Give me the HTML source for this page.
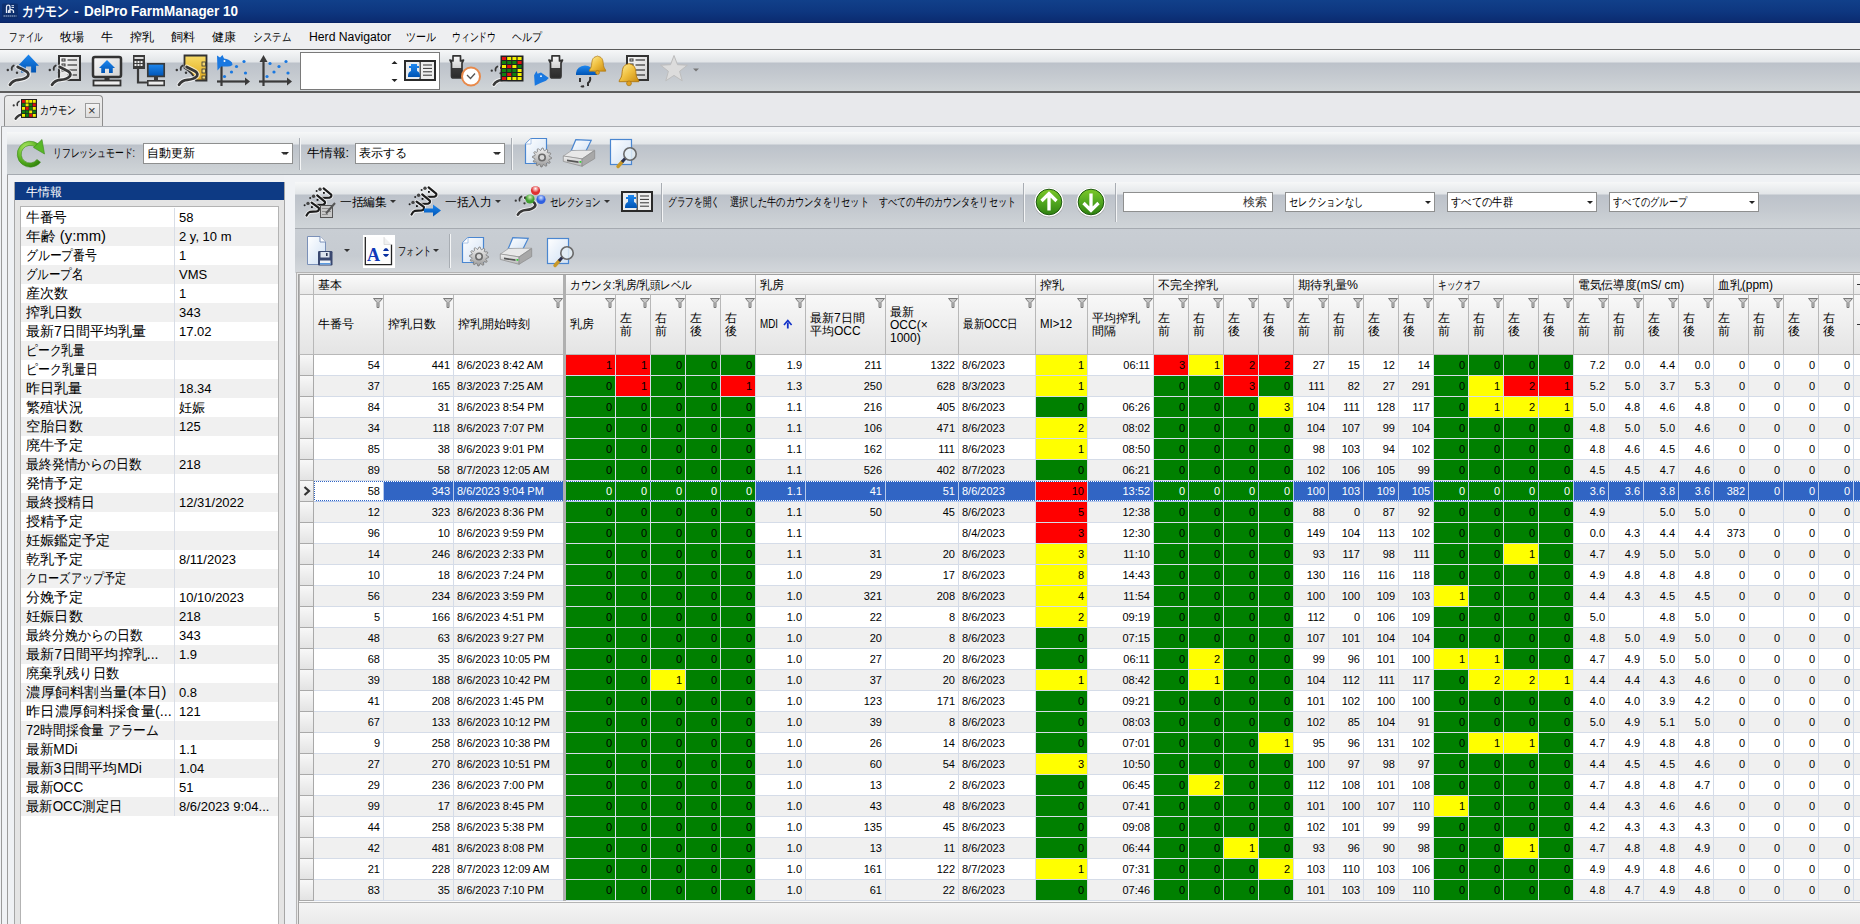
<!DOCTYPE html><html><head><meta charset="utf-8"><style>
*{margin:0;padding:0;box-sizing:border-box}
html,body{width:1860px;height:924px;overflow:hidden;background:#f0f2f5;font-family:"Liberation Sans",sans-serif;font-size:12px;color:#000}
.a{position:absolute}
.t{position:absolute;white-space:nowrap;line-height:1;transform-origin:0 0}
.tb{background:linear-gradient(#f6f7f8 0,#e2e5e8 12px,#bcc2ca 13px,#c4c9cf 60%,#d0d5d8 100%)}
.cb{position:absolute;background:#fff;border:1px solid #8e8f8f}
.cb i{position:absolute;right:3px;top:8px;width:0;height:0;border-left:3px solid transparent;border-right:3px solid transparent;border-top:3px solid #222}
.sep{position:absolute;width:2px;border-left:1px solid #a8adb3;border-right:1px solid #f4f5f6}
.hb{position:absolute;background:linear-gradient(#fbfbfb,#e9e9e9)}
.hc{position:absolute;background:linear-gradient(#f8f8f8,#eaeaea 70%,#e4e4e4)}
.fn{position:absolute;top:298px;width:10px;height:10px}
.r{position:absolute;height:20px}
.c{position:absolute;top:0;height:20px;font-size:11px;line-height:20px;white-space:nowrap;overflow:hidden}
.c.n{text-align:right;padding-right:3px}
.c.l{padding-left:3px}
.g{background:#008000}.rd{background:#f00}.y{background:#ff0}
.sel .c{color:#fff}
.pr{position:absolute;left:21px;width:257px;height:19px}
</style></head><body><div class="a" style="left:0px;top:0px;width:1860px;height:23px;background:linear-gradient(#11408a,#0e3780 50%,#0b2b70 95%,#06205e)"></div><svg class="a" style="left:0;top:0" width="20" height="22"><rect x="2" y="3.5" width="16" height="15" rx="1.5" fill="#0c2d68" fill-opacity="0.8"/><path d="M6.5,13 V7 Q6.5,5.2 8.3,5.2 Q10,5.2 10,7 V13 M8.5,13 V11.5 Q8.5,9.6 11,9.6 Q13.5,9.6 13.5,11.5 V13" fill="none" stroke="#e8eef8" stroke-width="1.3"/><rect x="11.5" y="5.2" width="2.5" height="1" fill="#dde6f4"/><rect x="11.5" y="7" width="2.5" height="1" fill="#dde6f4"/><path d="M3.5,16 H16.5" stroke="#aabbd8" stroke-width="1.2" stroke-dasharray="1.5 .5"/></svg><div id="t1" class="t" style="left:22px;top:4px;font-size:14px;font-weight:bold;color:#fff;transform:scaleX(0.839);">カウモン</div><div id="t2" class="t" style="left:74px;top:4px;font-size:14px;font-weight:bold;color:#fff;">-</div><div id="t3" class="t" style="left:84px;top:4px;font-size:14px;font-weight:bold;color:#fff;transform:scaleX(0.961);">DelPro FarmManager 10</div><div class="a" style="left:0px;top:23px;width:1860px;height:26px;background:#eeeff1"></div><div id="t4" class="t" style="left:9px;top:31px;transform:scaleX(0.708);">ファイル</div><div id="t5" class="t" style="left:60px;top:31px;transform:scaleX(1.000);">牧場</div><div id="t6" class="t" style="left:101px;top:31px;transform:scaleX(1.000);">牛</div><div id="t7" class="t" style="left:130px;top:31px;transform:scaleX(1.000);">搾乳</div><div id="t8" class="t" style="left:171px;top:31px;transform:scaleX(1.000);">飼料</div><div id="t9" class="t" style="left:212px;top:31px;transform:scaleX(1.000);">健康</div><div id="t10" class="t" style="left:253px;top:31px;transform:scaleX(0.792);">システム</div><div id="t11" class="t" style="left:309px;top:31px;transform:scaleX(1.016);">Herd Navigator</div><div id="t12" class="t" style="left:406px;top:31px;transform:scaleX(0.833);">ツール</div><div id="t13" class="t" style="left:452px;top:31px;transform:scaleX(0.733);">ウィンドウ</div><div id="t14" class="t" style="left:512px;top:31px;transform:scaleX(0.833);">ヘルプ</div><div class="a tb" style="left:0px;top:49px;width:1860px;height:44px;border-top:1px solid #5a5a5a;border-bottom:2px solid #5d5d5d"></div><div class="a" style="left:0px;top:93px;width:1860px;height:33px;background:#e8e9ec"></div><div class="a" style="left:4px;top:95px;width:99px;height:32px;background:linear-gradient(#ececec,#e3e3e3);border:1px solid #8d8d8d;border-bottom:none;border-radius:4px 4px 0 0"></div><div id="t15" class="t" style="left:40px;top:104px;transform:scaleX(0.750);">カウモン</div><div class="a" style="left:85px;top:103px;width:15px;height:15px;background:linear-gradient(#f4f4f4,#dcdcdc);border:1px solid #9a9a9a"></div><div id="t16" class="t" style="left:88px;top:104px;font-size:13px;color:#333;">×</div><div class="a" style="left:1px;top:126px;width:1859px;height:798px;background:#f0f2f5;border-left:1px solid #9a9a9a;border-top:1px solid #a9acb1"></div><div class="a tb" style="left:7px;top:132px;width:1853px;height:43px;border-bottom:1px solid #a5aab0"></div><div id="t17" class="t" style="left:53px;top:147px;transform:scaleX(0.736);">リフレッシュモード:</div><div class="cb" style="left:143px;top:143px;width:150px;height:21px"><i></i></div><div id="t18" class="t" style="left:147px;top:147px;">自動更新</div><div class="sep" style="left:299px;top:138px;height:32px"></div><div id="t19" class="t" style="left:307px;top:147px;transform:scaleX(1.068);">牛情報:</div><div class="cb" style="left:355px;top:143px;width:150px;height:21px"><i></i></div><div id="t20" class="t" style="left:359px;top:147px;">表示する</div><div class="sep" style="left:511px;top:138px;height:32px"></div><div class="a" style="left:7px;top:175px;width:278px;height:749px;background:#eff1f4;border-left:1px solid #9c9c9c;border-right:1px solid #9c9c9c"></div><div class="a" style="left:14px;top:182px;width:271px;height:742px;background:#e4e4e4;border-left:1px solid #a6a6a6;border-right:1px solid #a6a6a6"></div><div class="a" style="left:284px;top:175px;width:2px;height:7px;background:#f0f2f5"></div><div class="a" style="left:15px;top:182px;width:269px;height:18px;background:#0d3a84"></div><div id="t21" class="t" style="left:26px;top:186px;color:#fff;transform:scaleX(1.000);">牛情報</div><div class="a" style="left:20px;top:206px;width:259px;height:718px;background:#fff;border:1px solid #b3b3b3;border-bottom:none"></div><div class="pr" style="top:208px;background:#fff"></div><div id="t22" class="t" style="left:26px;top:210px;font-size:14px;transform:scaleX(0.976);">牛番号</div><div id="t23" class="t" style="left:179px;top:211px;font-size:13px;">58</div><div class="pr" style="top:227px;background:#f0f0f0"></div><div id="t24" class="t" style="left:26px;top:229px;font-size:14px;transform:scaleX(1.060);">年齢 (y:mm)</div><div id="t25" class="t" style="left:179px;top:230px;font-size:13px;">2 y, 10 m</div><div class="pr" style="top:246px;background:#fff"></div><div id="t26" class="t" style="left:26px;top:248px;font-size:14px;transform:scaleX(0.845);">グループ番号</div><div id="t27" class="t" style="left:179px;top:249px;font-size:13px;">1</div><div class="pr" style="top:265px;background:#f0f0f0"></div><div id="t28" class="t" style="left:26px;top:267px;font-size:14px;transform:scaleX(0.821);">グループ名</div><div id="t29" class="t" style="left:179px;top:268px;font-size:13px;">VMS</div><div class="pr" style="top:284px;background:#fff"></div><div id="t30" class="t" style="left:26px;top:286px;font-size:14px;transform:scaleX(1.012);">産次数</div><div id="t31" class="t" style="left:179px;top:287px;font-size:13px;">1</div><div class="pr" style="top:303px;background:#f0f0f0"></div><div id="t32" class="t" style="left:26px;top:305px;font-size:14px;transform:scaleX(1.009);">搾乳日数</div><div id="t33" class="t" style="left:179px;top:306px;font-size:13px;">343</div><div class="pr" style="top:322px;background:#fff"></div><div id="t34" class="t" style="left:26px;top:324px;font-size:14px;transform:scaleX(1.002);">最新7日間平均乳量</div><div id="t35" class="t" style="left:179px;top:325px;font-size:13px;">17.02</div><div class="pr" style="top:341px;background:#f0f0f0"></div><div id="t36" class="t" style="left:26px;top:343px;font-size:14px;transform:scaleX(0.843);">ピーク乳量</div><div class="pr" style="top:360px;background:#fff"></div><div id="t37" class="t" style="left:26px;top:362px;font-size:14px;transform:scaleX(0.852);">ピーク乳量日</div><div class="pr" style="top:379px;background:#f0f0f0"></div><div id="t38" class="t" style="left:26px;top:381px;font-size:14px;transform:scaleX(1.009);">昨日乳量</div><div id="t39" class="t" style="left:179px;top:382px;font-size:13px;">18.34</div><div class="pr" style="top:398px;background:#fff"></div><div id="t40" class="t" style="left:26px;top:400px;font-size:14px;transform:scaleX(1.012);">繁殖状況</div><div id="t41" class="t" style="left:179px;top:401px;font-size:13px;">妊娠</div><div class="pr" style="top:417px;background:#f0f0f0"></div><div id="t42" class="t" style="left:26px;top:419px;font-size:14px;transform:scaleX(1.012);">空胎日数</div><div id="t43" class="t" style="left:179px;top:420px;font-size:13px;">125</div><div class="pr" style="top:436px;background:#fff"></div><div id="t44" class="t" style="left:26px;top:438px;font-size:14px;transform:scaleX(1.012);">廃牛予定</div><div class="pr" style="top:455px;background:#f0f0f0"></div><div id="t45" class="t" style="left:26px;top:457px;font-size:14px;transform:scaleX(0.919);">最終発情からの日数</div><div id="t46" class="t" style="left:179px;top:458px;font-size:13px;">218</div><div class="pr" style="top:474px;background:#fff"></div><div id="t47" class="t" style="left:26px;top:476px;font-size:14px;transform:scaleX(1.012);">発情予定</div><div class="pr" style="top:493px;background:#f0f0f0"></div><div id="t48" class="t" style="left:26px;top:495px;font-size:14px;transform:scaleX(0.986);">最終授精日</div><div id="t49" class="t" style="left:179px;top:496px;font-size:13px;">12/31/2022</div><div class="pr" style="top:512px;background:#fff"></div><div id="t50" class="t" style="left:26px;top:514px;font-size:14px;transform:scaleX(1.012);">授精予定</div><div class="pr" style="top:531px;background:#f0f0f0"></div><div id="t51" class="t" style="left:26px;top:533px;font-size:14px;transform:scaleX(1.005);">妊娠鑑定予定</div><div class="pr" style="top:550px;background:#fff"></div><div id="t52" class="t" style="left:26px;top:552px;font-size:14px;transform:scaleX(1.012);">乾乳予定</div><div id="t53" class="t" style="left:179px;top:553px;font-size:13px;">8/11/2023</div><div class="pr" style="top:569px;background:#f0f0f0"></div><div id="t54" class="t" style="left:26px;top:571px;font-size:14px;transform:scaleX(0.796);">クローズアップ予定</div><div class="pr" style="top:588px;background:#fff"></div><div id="t55" class="t" style="left:26px;top:590px;font-size:14px;transform:scaleX(1.012);">分娩予定</div><div id="t56" class="t" style="left:179px;top:591px;font-size:13px;">10/10/2023</div><div class="pr" style="top:607px;background:#f0f0f0"></div><div id="t57" class="t" style="left:26px;top:609px;font-size:14px;transform:scaleX(1.014);">妊娠日数</div><div id="t58" class="t" style="left:179px;top:610px;font-size:13px;">218</div><div class="pr" style="top:626px;background:#fff"></div><div id="t59" class="t" style="left:26px;top:628px;font-size:14px;transform:scaleX(0.925);">最終分娩からの日数</div><div id="t60" class="t" style="left:179px;top:629px;font-size:13px;">343</div><div class="pr" style="top:645px;background:#f0f0f0"></div><div id="t61" class="t" style="left:26px;top:647px;font-size:14px;transform:scaleX(1.008);">最新7日間平均搾乳...</div><div id="t62" class="t" style="left:179px;top:648px;font-size:13px;">1.9</div><div class="pr" style="top:664px;background:#fff"></div><div id="t63" class="t" style="left:26px;top:666px;font-size:14px;transform:scaleX(0.954);">廃棄乳残り日数</div><div class="pr" style="top:683px;background:#f0f0f0"></div><div id="t64" class="t" style="left:26px;top:685px;font-size:14px;transform:scaleX(1.037);">濃厚飼料割当量(本日)</div><div id="t65" class="t" style="left:179px;top:686px;font-size:13px;">0.8</div><div class="pr" style="top:702px;background:#fff"></div><div id="t66" class="t" style="left:26px;top:704px;font-size:14px;transform:scaleX(1.023);">昨日濃厚飼料採食量(...</div><div id="t67" class="t" style="left:179px;top:705px;font-size:13px;">121</div><div class="pr" style="top:721px;background:#f0f0f0"></div><div id="t68" class="t" style="left:26px;top:723px;font-size:14px;transform:scaleX(0.914);">72時間採食量 アラーム</div><div class="pr" style="top:740px;background:#fff"></div><div id="t69" class="t" style="left:26px;top:742px;font-size:14px;transform:scaleX(0.974);">最新MDi</div><div id="t70" class="t" style="left:179px;top:743px;font-size:13px;">1.1</div><div class="pr" style="top:759px;background:#f0f0f0"></div><div id="t71" class="t" style="left:26px;top:761px;font-size:14px;transform:scaleX(0.993);">最新3日間平均MDi</div><div id="t72" class="t" style="left:179px;top:762px;font-size:13px;">1.04</div><div class="pr" style="top:778px;background:#fff"></div><div id="t73" class="t" style="left:26px;top:780px;font-size:14px;transform:scaleX(0.967);">最新OCC</div><div id="t74" class="t" style="left:179px;top:781px;font-size:13px;">51</div><div class="pr" style="top:797px;background:#f0f0f0"></div><div id="t75" class="t" style="left:26px;top:799px;font-size:14px;transform:scaleX(0.952);">最新OCC測定日</div><div id="t76" class="t" style="left:179px;top:800px;font-size:13px;">8/6/2023 9:04...</div><div class="a" style="left:174px;top:208px;width:1px;height:608px;background:#d8dde6"></div><div class="a" style="left:295px;top:182px;width:1565px;height:742px;background:#eef0f3"></div><div class="a tb" style="left:295px;top:182px;width:1565px;height:47px;border-bottom:1px solid #a5aab0"></div><div class="a" style="left:295px;top:229px;width:1565px;height:44px;background:linear-gradient(#c9ced4,#c6cbd1 60%,#d3d7db)"></div><div class="a" style="left:296px;top:272px;width:1564px;height:632px;background:#e8e8e8;border:1px solid #b4b4b4;border-right:none"></div><div class="a" style="left:298px;top:274px;width:1562px;height:628px;background:#fff;border:1px solid #a0a0a0;border-right:none"></div><div class="a" style="left:299px;top:275px;width:1561px;height:80px;background:#b8b8b8"></div><div class="hb" style="left:300px;top:275px;width:13px;height:19px"></div><div class="hb" style="left:314px;top:275px;width:249px;height:19px"></div><div id="t77" class="t" style="left:318px;top:279px;transform:scaleX(1.000);">基本</div><div class="hb" style="left:566px;top:275px;width:189px;height:19px"></div><div id="t78" class="t" style="left:570px;top:279px;transform:scaleX(0.880);">カウンタ:乳房/乳頭レベル</div><div class="hb" style="left:756px;top:275px;width:279px;height:19px"></div><div id="t79" class="t" style="left:760px;top:279px;transform:scaleX(1.000);">乳房</div><div class="hb" style="left:1036px;top:275px;width:117px;height:19px"></div><div id="t80" class="t" style="left:1040px;top:279px;transform:scaleX(1.000);">搾乳</div><div class="hb" style="left:1154px;top:275px;width:139px;height:19px"></div><div id="t81" class="t" style="left:1158px;top:279px;transform:scaleX(1.000);">不完全搾乳</div><div class="hb" style="left:1294px;top:275px;width:139px;height:19px"></div><div id="t82" class="t" style="left:1298px;top:279px;transform:scaleX(1.023);">期待乳量%</div><div class="hb" style="left:1434px;top:275px;width:139px;height:19px"></div><div id="t83" class="t" style="left:1438px;top:279px;transform:scaleX(0.717);">キックオフ</div><div class="hb" style="left:1574px;top:275px;width:139px;height:19px"></div><div id="t84" class="t" style="left:1578px;top:279px;transform:scaleX(0.976);">電気伝導度(mS/ cm)</div><div class="hb" style="left:1714px;top:275px;width:139px;height:19px"></div><div id="t85" class="t" style="left:1718px;top:279px;transform:scaleX(0.994);">血乳(ppm)</div><div class="hb" style="left:1854px;top:275px;width:6px;height:19px"></div><div class="hc" style="left:300px;top:295px;width:13px;height:59px"></div><div class="hc" style="left:314px;top:295px;width:69px;height:59px"></div><div class="t" style="left:318px;top:318px;line-height:13px">牛番号</div><svg class="fn" style="left:373px" viewBox="0 0 10 10"><path d="M0.5 0.5H9.5L6 4.5V9.5H4V4.5Z" fill="#c9c9c9" stroke="#7a7a7a" stroke-width="1"/></svg><div class="hc" style="left:384px;top:295px;width:69px;height:59px"></div><div class="t" style="left:388px;top:318px;line-height:13px">搾乳日数</div><svg class="fn" style="left:443px" viewBox="0 0 10 10"><path d="M0.5 0.5H9.5L6 4.5V9.5H4V4.5Z" fill="#c9c9c9" stroke="#7a7a7a" stroke-width="1"/></svg><div class="hc" style="left:454px;top:295px;width:109px;height:59px"></div><div class="t" style="left:458px;top:318px;line-height:13px">搾乳開始時刻</div><svg class="fn" style="left:553px" viewBox="0 0 10 10"><path d="M0.5 0.5H9.5L6 4.5V9.5H4V4.5Z" fill="#c9c9c9" stroke="#7a7a7a" stroke-width="1"/></svg><div class="hc" style="left:566px;top:295px;width:49px;height:59px"></div><div class="t" style="left:570px;top:318px;line-height:13px">乳房</div><svg class="fn" style="left:605px" viewBox="0 0 10 10"><path d="M0.5 0.5H9.5L6 4.5V9.5H4V4.5Z" fill="#c9c9c9" stroke="#7a7a7a" stroke-width="1"/></svg><div class="hc" style="left:616px;top:295px;width:34px;height:59px"></div><div class="t" style="left:620px;top:312px;line-height:13px">左<br>前</div><svg class="fn" style="left:640px" viewBox="0 0 10 10"><path d="M0.5 0.5H9.5L6 4.5V9.5H4V4.5Z" fill="#c9c9c9" stroke="#7a7a7a" stroke-width="1"/></svg><div class="hc" style="left:651px;top:295px;width:34px;height:59px"></div><div class="t" style="left:655px;top:312px;line-height:13px">右<br>前</div><svg class="fn" style="left:675px" viewBox="0 0 10 10"><path d="M0.5 0.5H9.5L6 4.5V9.5H4V4.5Z" fill="#c9c9c9" stroke="#7a7a7a" stroke-width="1"/></svg><div class="hc" style="left:686px;top:295px;width:34px;height:59px"></div><div class="t" style="left:690px;top:312px;line-height:13px">左<br>後</div><svg class="fn" style="left:710px" viewBox="0 0 10 10"><path d="M0.5 0.5H9.5L6 4.5V9.5H4V4.5Z" fill="#c9c9c9" stroke="#7a7a7a" stroke-width="1"/></svg><div class="hc" style="left:721px;top:295px;width:34px;height:59px"></div><div class="t" style="left:725px;top:312px;line-height:13px">右<br>後</div><svg class="fn" style="left:745px" viewBox="0 0 10 10"><path d="M0.5 0.5H9.5L6 4.5V9.5H4V4.5Z" fill="#c9c9c9" stroke="#7a7a7a" stroke-width="1"/></svg><div class="hc" style="left:756px;top:295px;width:49px;height:59px"></div><div id="t86" class="t" style="left:760px;top:318px;line-height:13px;transform:scaleX(0.818);">MDI</div><svg class="fn" style="left:795px" viewBox="0 0 10 10"><path d="M0.5 0.5H9.5L6 4.5V9.5H4V4.5Z" fill="#c9c9c9" stroke="#7a7a7a" stroke-width="1"/></svg><div class="hc" style="left:806px;top:295px;width:79px;height:59px"></div><div class="t" style="left:810px;top:312px;line-height:13px">最新7日間<br>平均OCC</div><svg class="fn" style="left:875px" viewBox="0 0 10 10"><path d="M0.5 0.5H9.5L6 4.5V9.5H4V4.5Z" fill="#c9c9c9" stroke="#7a7a7a" stroke-width="1"/></svg><div class="hc" style="left:886px;top:295px;width:72px;height:59px"></div><div class="t" style="left:890px;top:306px;line-height:13px">最新<br>OCC(×<br>1000)</div><svg class="fn" style="left:948px" viewBox="0 0 10 10"><path d="M0.5 0.5H9.5L6 4.5V9.5H4V4.5Z" fill="#c9c9c9" stroke="#7a7a7a" stroke-width="1"/></svg><div class="hc" style="left:959px;top:295px;width:76px;height:59px"></div><div id="t87" class="t" style="left:963px;top:318px;line-height:13px;transform:scaleX(0.878);">最新OCC日</div><svg class="fn" style="left:1025px" viewBox="0 0 10 10"><path d="M0.5 0.5H9.5L6 4.5V9.5H4V4.5Z" fill="#c9c9c9" stroke="#7a7a7a" stroke-width="1"/></svg><div class="hc" style="left:1036px;top:295px;width:51px;height:59px"></div><div id="t88" class="t" style="left:1040px;top:318px;line-height:13px;transform:scaleX(0.950);">MI&gt;12</div><svg class="fn" style="left:1077px" viewBox="0 0 10 10"><path d="M0.5 0.5H9.5L6 4.5V9.5H4V4.5Z" fill="#c9c9c9" stroke="#7a7a7a" stroke-width="1"/></svg><div class="hc" style="left:1088px;top:295px;width:65px;height:59px"></div><div class="t" style="left:1092px;top:312px;line-height:13px">平均搾乳<br>間隔</div><svg class="fn" style="left:1143px" viewBox="0 0 10 10"><path d="M0.5 0.5H9.5L6 4.5V9.5H4V4.5Z" fill="#c9c9c9" stroke="#7a7a7a" stroke-width="1"/></svg><div class="hc" style="left:1154px;top:295px;width:34px;height:59px"></div><div class="t" style="left:1158px;top:312px;line-height:13px">左<br>前</div><svg class="fn" style="left:1178px" viewBox="0 0 10 10"><path d="M0.5 0.5H9.5L6 4.5V9.5H4V4.5Z" fill="#c9c9c9" stroke="#7a7a7a" stroke-width="1"/></svg><div class="hc" style="left:1189px;top:295px;width:34px;height:59px"></div><div class="t" style="left:1193px;top:312px;line-height:13px">右<br>前</div><svg class="fn" style="left:1213px" viewBox="0 0 10 10"><path d="M0.5 0.5H9.5L6 4.5V9.5H4V4.5Z" fill="#c9c9c9" stroke="#7a7a7a" stroke-width="1"/></svg><div class="hc" style="left:1224px;top:295px;width:34px;height:59px"></div><div class="t" style="left:1228px;top:312px;line-height:13px">左<br>後</div><svg class="fn" style="left:1248px" viewBox="0 0 10 10"><path d="M0.5 0.5H9.5L6 4.5V9.5H4V4.5Z" fill="#c9c9c9" stroke="#7a7a7a" stroke-width="1"/></svg><div class="hc" style="left:1259px;top:295px;width:34px;height:59px"></div><div class="t" style="left:1263px;top:312px;line-height:13px">右<br>後</div><svg class="fn" style="left:1283px" viewBox="0 0 10 10"><path d="M0.5 0.5H9.5L6 4.5V9.5H4V4.5Z" fill="#c9c9c9" stroke="#7a7a7a" stroke-width="1"/></svg><div class="hc" style="left:1294px;top:295px;width:34px;height:59px"></div><div class="t" style="left:1298px;top:312px;line-height:13px">左<br>前</div><svg class="fn" style="left:1318px" viewBox="0 0 10 10"><path d="M0.5 0.5H9.5L6 4.5V9.5H4V4.5Z" fill="#c9c9c9" stroke="#7a7a7a" stroke-width="1"/></svg><div class="hc" style="left:1329px;top:295px;width:34px;height:59px"></div><div class="t" style="left:1333px;top:312px;line-height:13px">右<br>前</div><svg class="fn" style="left:1353px" viewBox="0 0 10 10"><path d="M0.5 0.5H9.5L6 4.5V9.5H4V4.5Z" fill="#c9c9c9" stroke="#7a7a7a" stroke-width="1"/></svg><div class="hc" style="left:1364px;top:295px;width:34px;height:59px"></div><div class="t" style="left:1368px;top:312px;line-height:13px">左<br>後</div><svg class="fn" style="left:1388px" viewBox="0 0 10 10"><path d="M0.5 0.5H9.5L6 4.5V9.5H4V4.5Z" fill="#c9c9c9" stroke="#7a7a7a" stroke-width="1"/></svg><div class="hc" style="left:1399px;top:295px;width:34px;height:59px"></div><div class="t" style="left:1403px;top:312px;line-height:13px">右<br>後</div><svg class="fn" style="left:1423px" viewBox="0 0 10 10"><path d="M0.5 0.5H9.5L6 4.5V9.5H4V4.5Z" fill="#c9c9c9" stroke="#7a7a7a" stroke-width="1"/></svg><div class="hc" style="left:1434px;top:295px;width:34px;height:59px"></div><div class="t" style="left:1438px;top:312px;line-height:13px">左<br>前</div><svg class="fn" style="left:1458px" viewBox="0 0 10 10"><path d="M0.5 0.5H9.5L6 4.5V9.5H4V4.5Z" fill="#c9c9c9" stroke="#7a7a7a" stroke-width="1"/></svg><div class="hc" style="left:1469px;top:295px;width:34px;height:59px"></div><div class="t" style="left:1473px;top:312px;line-height:13px">右<br>前</div><svg class="fn" style="left:1493px" viewBox="0 0 10 10"><path d="M0.5 0.5H9.5L6 4.5V9.5H4V4.5Z" fill="#c9c9c9" stroke="#7a7a7a" stroke-width="1"/></svg><div class="hc" style="left:1504px;top:295px;width:34px;height:59px"></div><div class="t" style="left:1508px;top:312px;line-height:13px">左<br>後</div><svg class="fn" style="left:1528px" viewBox="0 0 10 10"><path d="M0.5 0.5H9.5L6 4.5V9.5H4V4.5Z" fill="#c9c9c9" stroke="#7a7a7a" stroke-width="1"/></svg><div class="hc" style="left:1539px;top:295px;width:34px;height:59px"></div><div class="t" style="left:1543px;top:312px;line-height:13px">右<br>後</div><svg class="fn" style="left:1563px" viewBox="0 0 10 10"><path d="M0.5 0.5H9.5L6 4.5V9.5H4V4.5Z" fill="#c9c9c9" stroke="#7a7a7a" stroke-width="1"/></svg><div class="hc" style="left:1574px;top:295px;width:34px;height:59px"></div><div class="t" style="left:1578px;top:312px;line-height:13px">左<br>前</div><svg class="fn" style="left:1598px" viewBox="0 0 10 10"><path d="M0.5 0.5H9.5L6 4.5V9.5H4V4.5Z" fill="#c9c9c9" stroke="#7a7a7a" stroke-width="1"/></svg><div class="hc" style="left:1609px;top:295px;width:34px;height:59px"></div><div class="t" style="left:1613px;top:312px;line-height:13px">右<br>前</div><svg class="fn" style="left:1633px" viewBox="0 0 10 10"><path d="M0.5 0.5H9.5L6 4.5V9.5H4V4.5Z" fill="#c9c9c9" stroke="#7a7a7a" stroke-width="1"/></svg><div class="hc" style="left:1644px;top:295px;width:34px;height:59px"></div><div class="t" style="left:1648px;top:312px;line-height:13px">左<br>後</div><svg class="fn" style="left:1668px" viewBox="0 0 10 10"><path d="M0.5 0.5H9.5L6 4.5V9.5H4V4.5Z" fill="#c9c9c9" stroke="#7a7a7a" stroke-width="1"/></svg><div class="hc" style="left:1679px;top:295px;width:34px;height:59px"></div><div class="t" style="left:1683px;top:312px;line-height:13px">右<br>後</div><svg class="fn" style="left:1703px" viewBox="0 0 10 10"><path d="M0.5 0.5H9.5L6 4.5V9.5H4V4.5Z" fill="#c9c9c9" stroke="#7a7a7a" stroke-width="1"/></svg><div class="hc" style="left:1714px;top:295px;width:34px;height:59px"></div><div class="t" style="left:1718px;top:312px;line-height:13px">左<br>前</div><svg class="fn" style="left:1738px" viewBox="0 0 10 10"><path d="M0.5 0.5H9.5L6 4.5V9.5H4V4.5Z" fill="#c9c9c9" stroke="#7a7a7a" stroke-width="1"/></svg><div class="hc" style="left:1749px;top:295px;width:34px;height:59px"></div><div class="t" style="left:1753px;top:312px;line-height:13px">右<br>前</div><svg class="fn" style="left:1773px" viewBox="0 0 10 10"><path d="M0.5 0.5H9.5L6 4.5V9.5H4V4.5Z" fill="#c9c9c9" stroke="#7a7a7a" stroke-width="1"/></svg><div class="hc" style="left:1784px;top:295px;width:34px;height:59px"></div><div class="t" style="left:1788px;top:312px;line-height:13px">左<br>後</div><svg class="fn" style="left:1808px" viewBox="0 0 10 10"><path d="M0.5 0.5H9.5L6 4.5V9.5H4V4.5Z" fill="#c9c9c9" stroke="#7a7a7a" stroke-width="1"/></svg><div class="hc" style="left:1819px;top:295px;width:34px;height:59px"></div><div class="t" style="left:1823px;top:312px;line-height:13px">右<br>後</div><svg class="fn" style="left:1843px" viewBox="0 0 10 10"><path d="M0.5 0.5H9.5L6 4.5V9.5H4V4.5Z" fill="#c9c9c9" stroke="#7a7a7a" stroke-width="1"/></svg><div class="hc" style="left:1854px;top:295px;width:6px;height:59px"></div><div class="r" style="left:299px;top:355px;width:1561px;background:#d5dce8;height:21px"><div class="c" style="left:0;width:15px;height:21px;background:linear-gradient(#f8f8f8,#e3e3e3);border-left:1px solid #a9a9a9;border-right:1px solid #a9a9a9;border-bottom:1px solid #a9a9a9;"></div><div class="c n " style="left:15px;width:69px;background:#fff;">54</div><div class="c n " style="left:85px;width:69px;background:#fff;">441</div><div class="c l " style="left:155px;width:109px;background:#fff;">8/6/2023 8:42 AM</div><div class="c n rd" style="left:267px;width:49px;">1</div><div class="c n rd" style="left:317px;width:34px;">1</div><div class="c n g" style="left:352px;width:34px;">0</div><div class="c n g" style="left:387px;width:34px;">0</div><div class="c n g" style="left:422px;width:34px;">0</div><div class="c n " style="left:457px;width:49px;background:#fff;">1.9</div><div class="c n " style="left:507px;width:79px;background:#fff;">211</div><div class="c n " style="left:587px;width:72px;background:#fff;">1322</div><div class="c l " style="left:660px;width:76px;background:#fff;">8/6/2023</div><div class="c n y" style="left:737px;width:51px;">1</div><div class="c n " style="left:789px;width:65px;background:#fff;">06:11</div><div class="c n rd" style="left:855px;width:34px;">3</div><div class="c n y" style="left:890px;width:34px;">1</div><div class="c n rd" style="left:925px;width:34px;">2</div><div class="c n rd" style="left:960px;width:34px;">2</div><div class="c n " style="left:995px;width:34px;background:#fff;">27</div><div class="c n " style="left:1030px;width:34px;background:#fff;">15</div><div class="c n " style="left:1065px;width:34px;background:#fff;">12</div><div class="c n " style="left:1100px;width:34px;background:#fff;">14</div><div class="c n g" style="left:1135px;width:34px;">0</div><div class="c n g" style="left:1170px;width:34px;">0</div><div class="c n g" style="left:1205px;width:34px;">0</div><div class="c n g" style="left:1240px;width:34px;">0</div><div class="c n " style="left:1275px;width:34px;background:#fff;">7.2</div><div class="c n " style="left:1310px;width:34px;background:#fff;">0.0</div><div class="c n " style="left:1345px;width:34px;background:#fff;">4.4</div><div class="c n " style="left:1380px;width:34px;background:#fff;">0.0</div><div class="c n " style="left:1415px;width:34px;background:#fff;">0</div><div class="c n " style="left:1450px;width:34px;background:#fff;">0</div><div class="c n " style="left:1485px;width:34px;background:#fff;">0</div><div class="c n " style="left:1520px;width:34px;background:#fff;">0</div><div class="c n " style="left:1555px;width:6px;background:#fff;"></div></div><div class="r" style="left:299px;top:376px;width:1561px;background:#d5dce8;height:21px"><div class="c" style="left:0;width:15px;height:21px;background:linear-gradient(#f8f8f8,#e3e3e3);border-left:1px solid #a9a9a9;border-right:1px solid #a9a9a9;border-bottom:1px solid #a9a9a9;"></div><div class="c n " style="left:15px;width:69px;background:#f0f0f0;">37</div><div class="c n " style="left:85px;width:69px;background:#f0f0f0;">165</div><div class="c l " style="left:155px;width:109px;background:#f0f0f0;">8/3/2023 7:25 AM</div><div class="c n g" style="left:267px;width:49px;">0</div><div class="c n rd" style="left:317px;width:34px;">1</div><div class="c n g" style="left:352px;width:34px;">0</div><div class="c n g" style="left:387px;width:34px;">0</div><div class="c n rd" style="left:422px;width:34px;">1</div><div class="c n " style="left:457px;width:49px;background:#f0f0f0;">1.3</div><div class="c n " style="left:507px;width:79px;background:#f0f0f0;">250</div><div class="c n " style="left:587px;width:72px;background:#f0f0f0;">628</div><div class="c l " style="left:660px;width:76px;background:#f0f0f0;">8/3/2023</div><div class="c n y" style="left:737px;width:51px;">1</div><div class="c n " style="left:789px;width:65px;background:#f0f0f0;"></div><div class="c n g" style="left:855px;width:34px;">0</div><div class="c n g" style="left:890px;width:34px;">0</div><div class="c n rd" style="left:925px;width:34px;">3</div><div class="c n g" style="left:960px;width:34px;">0</div><div class="c n " style="left:995px;width:34px;background:#f0f0f0;">111</div><div class="c n " style="left:1030px;width:34px;background:#f0f0f0;">82</div><div class="c n " style="left:1065px;width:34px;background:#f0f0f0;">27</div><div class="c n " style="left:1100px;width:34px;background:#f0f0f0;">291</div><div class="c n g" style="left:1135px;width:34px;">0</div><div class="c n y" style="left:1170px;width:34px;">1</div><div class="c n rd" style="left:1205px;width:34px;">2</div><div class="c n rd" style="left:1240px;width:34px;">1</div><div class="c n " style="left:1275px;width:34px;background:#f0f0f0;">5.2</div><div class="c n " style="left:1310px;width:34px;background:#f0f0f0;">5.0</div><div class="c n " style="left:1345px;width:34px;background:#f0f0f0;">3.7</div><div class="c n " style="left:1380px;width:34px;background:#f0f0f0;">5.3</div><div class="c n " style="left:1415px;width:34px;background:#f0f0f0;">0</div><div class="c n " style="left:1450px;width:34px;background:#f0f0f0;">0</div><div class="c n " style="left:1485px;width:34px;background:#f0f0f0;">0</div><div class="c n " style="left:1520px;width:34px;background:#f0f0f0;">0</div><div class="c n " style="left:1555px;width:6px;background:#f0f0f0;"></div></div><div class="r" style="left:299px;top:397px;width:1561px;background:#d5dce8;height:21px"><div class="c" style="left:0;width:15px;height:21px;background:linear-gradient(#f8f8f8,#e3e3e3);border-left:1px solid #a9a9a9;border-right:1px solid #a9a9a9;border-bottom:1px solid #a9a9a9;"></div><div class="c n " style="left:15px;width:69px;background:#fff;">84</div><div class="c n " style="left:85px;width:69px;background:#fff;">31</div><div class="c l " style="left:155px;width:109px;background:#fff;">8/6/2023 8:54 PM</div><div class="c n g" style="left:267px;width:49px;">0</div><div class="c n g" style="left:317px;width:34px;">0</div><div class="c n g" style="left:352px;width:34px;">0</div><div class="c n g" style="left:387px;width:34px;">0</div><div class="c n g" style="left:422px;width:34px;">0</div><div class="c n " style="left:457px;width:49px;background:#fff;">1.1</div><div class="c n " style="left:507px;width:79px;background:#fff;">216</div><div class="c n " style="left:587px;width:72px;background:#fff;">405</div><div class="c l " style="left:660px;width:76px;background:#fff;">8/6/2023</div><div class="c n g" style="left:737px;width:51px;">0</div><div class="c n " style="left:789px;width:65px;background:#fff;">06:26</div><div class="c n g" style="left:855px;width:34px;">0</div><div class="c n g" style="left:890px;width:34px;">0</div><div class="c n g" style="left:925px;width:34px;">0</div><div class="c n y" style="left:960px;width:34px;">3</div><div class="c n " style="left:995px;width:34px;background:#fff;">104</div><div class="c n " style="left:1030px;width:34px;background:#fff;">111</div><div class="c n " style="left:1065px;width:34px;background:#fff;">128</div><div class="c n " style="left:1100px;width:34px;background:#fff;">117</div><div class="c n g" style="left:1135px;width:34px;">0</div><div class="c n y" style="left:1170px;width:34px;">1</div><div class="c n y" style="left:1205px;width:34px;">2</div><div class="c n y" style="left:1240px;width:34px;">1</div><div class="c n " style="left:1275px;width:34px;background:#fff;">5.0</div><div class="c n " style="left:1310px;width:34px;background:#fff;">4.8</div><div class="c n " style="left:1345px;width:34px;background:#fff;">4.6</div><div class="c n " style="left:1380px;width:34px;background:#fff;">4.8</div><div class="c n " style="left:1415px;width:34px;background:#fff;">0</div><div class="c n " style="left:1450px;width:34px;background:#fff;">0</div><div class="c n " style="left:1485px;width:34px;background:#fff;">0</div><div class="c n " style="left:1520px;width:34px;background:#fff;">0</div><div class="c n " style="left:1555px;width:6px;background:#fff;"></div></div><div class="r" style="left:299px;top:418px;width:1561px;background:#d5dce8;height:21px"><div class="c" style="left:0;width:15px;height:21px;background:linear-gradient(#f8f8f8,#e3e3e3);border-left:1px solid #a9a9a9;border-right:1px solid #a9a9a9;border-bottom:1px solid #a9a9a9;"></div><div class="c n " style="left:15px;width:69px;background:#f0f0f0;">34</div><div class="c n " style="left:85px;width:69px;background:#f0f0f0;">118</div><div class="c l " style="left:155px;width:109px;background:#f0f0f0;">8/6/2023 7:07 PM</div><div class="c n g" style="left:267px;width:49px;">0</div><div class="c n g" style="left:317px;width:34px;">0</div><div class="c n g" style="left:352px;width:34px;">0</div><div class="c n g" style="left:387px;width:34px;">0</div><div class="c n g" style="left:422px;width:34px;">0</div><div class="c n " style="left:457px;width:49px;background:#f0f0f0;">1.1</div><div class="c n " style="left:507px;width:79px;background:#f0f0f0;">106</div><div class="c n " style="left:587px;width:72px;background:#f0f0f0;">471</div><div class="c l " style="left:660px;width:76px;background:#f0f0f0;">8/6/2023</div><div class="c n y" style="left:737px;width:51px;">2</div><div class="c n " style="left:789px;width:65px;background:#f0f0f0;">08:02</div><div class="c n g" style="left:855px;width:34px;">0</div><div class="c n g" style="left:890px;width:34px;">0</div><div class="c n g" style="left:925px;width:34px;">0</div><div class="c n g" style="left:960px;width:34px;">0</div><div class="c n " style="left:995px;width:34px;background:#f0f0f0;">104</div><div class="c n " style="left:1030px;width:34px;background:#f0f0f0;">107</div><div class="c n " style="left:1065px;width:34px;background:#f0f0f0;">99</div><div class="c n " style="left:1100px;width:34px;background:#f0f0f0;">104</div><div class="c n g" style="left:1135px;width:34px;">0</div><div class="c n g" style="left:1170px;width:34px;">0</div><div class="c n g" style="left:1205px;width:34px;">0</div><div class="c n g" style="left:1240px;width:34px;">0</div><div class="c n " style="left:1275px;width:34px;background:#f0f0f0;">4.8</div><div class="c n " style="left:1310px;width:34px;background:#f0f0f0;">5.0</div><div class="c n " style="left:1345px;width:34px;background:#f0f0f0;">5.0</div><div class="c n " style="left:1380px;width:34px;background:#f0f0f0;">4.6</div><div class="c n " style="left:1415px;width:34px;background:#f0f0f0;">0</div><div class="c n " style="left:1450px;width:34px;background:#f0f0f0;">0</div><div class="c n " style="left:1485px;width:34px;background:#f0f0f0;">0</div><div class="c n " style="left:1520px;width:34px;background:#f0f0f0;">0</div><div class="c n " style="left:1555px;width:6px;background:#f0f0f0;"></div></div><div class="r" style="left:299px;top:439px;width:1561px;background:#d5dce8;height:21px"><div class="c" style="left:0;width:15px;height:21px;background:linear-gradient(#f8f8f8,#e3e3e3);border-left:1px solid #a9a9a9;border-right:1px solid #a9a9a9;border-bottom:1px solid #a9a9a9;"></div><div class="c n " style="left:15px;width:69px;background:#fff;">85</div><div class="c n " style="left:85px;width:69px;background:#fff;">38</div><div class="c l " style="left:155px;width:109px;background:#fff;">8/6/2023 9:01 PM</div><div class="c n g" style="left:267px;width:49px;">0</div><div class="c n g" style="left:317px;width:34px;">0</div><div class="c n g" style="left:352px;width:34px;">0</div><div class="c n g" style="left:387px;width:34px;">0</div><div class="c n g" style="left:422px;width:34px;">0</div><div class="c n " style="left:457px;width:49px;background:#fff;">1.1</div><div class="c n " style="left:507px;width:79px;background:#fff;">162</div><div class="c n " style="left:587px;width:72px;background:#fff;">111</div><div class="c l " style="left:660px;width:76px;background:#fff;">8/6/2023</div><div class="c n y" style="left:737px;width:51px;">1</div><div class="c n " style="left:789px;width:65px;background:#fff;">08:50</div><div class="c n g" style="left:855px;width:34px;">0</div><div class="c n g" style="left:890px;width:34px;">0</div><div class="c n g" style="left:925px;width:34px;">0</div><div class="c n g" style="left:960px;width:34px;">0</div><div class="c n " style="left:995px;width:34px;background:#fff;">98</div><div class="c n " style="left:1030px;width:34px;background:#fff;">103</div><div class="c n " style="left:1065px;width:34px;background:#fff;">94</div><div class="c n " style="left:1100px;width:34px;background:#fff;">102</div><div class="c n g" style="left:1135px;width:34px;">0</div><div class="c n g" style="left:1170px;width:34px;">0</div><div class="c n g" style="left:1205px;width:34px;">0</div><div class="c n g" style="left:1240px;width:34px;">0</div><div class="c n " style="left:1275px;width:34px;background:#fff;">4.8</div><div class="c n " style="left:1310px;width:34px;background:#fff;">4.6</div><div class="c n " style="left:1345px;width:34px;background:#fff;">4.5</div><div class="c n " style="left:1380px;width:34px;background:#fff;">4.6</div><div class="c n " style="left:1415px;width:34px;background:#fff;">0</div><div class="c n " style="left:1450px;width:34px;background:#fff;">0</div><div class="c n " style="left:1485px;width:34px;background:#fff;">0</div><div class="c n " style="left:1520px;width:34px;background:#fff;">0</div><div class="c n " style="left:1555px;width:6px;background:#fff;"></div></div><div class="r" style="left:299px;top:460px;width:1561px;background:#d5dce8;height:21px"><div class="c" style="left:0;width:15px;height:21px;background:linear-gradient(#f8f8f8,#e3e3e3);border-left:1px solid #a9a9a9;border-right:1px solid #a9a9a9;border-bottom:1px solid #a9a9a9;"></div><div class="c n " style="left:15px;width:69px;background:#f0f0f0;">89</div><div class="c n " style="left:85px;width:69px;background:#f0f0f0;">58</div><div class="c l " style="left:155px;width:109px;background:#f0f0f0;">8/7/2023 12:05 AM</div><div class="c n g" style="left:267px;width:49px;">0</div><div class="c n g" style="left:317px;width:34px;">0</div><div class="c n g" style="left:352px;width:34px;">0</div><div class="c n g" style="left:387px;width:34px;">0</div><div class="c n g" style="left:422px;width:34px;">0</div><div class="c n " style="left:457px;width:49px;background:#f0f0f0;">1.1</div><div class="c n " style="left:507px;width:79px;background:#f0f0f0;">526</div><div class="c n " style="left:587px;width:72px;background:#f0f0f0;">402</div><div class="c l " style="left:660px;width:76px;background:#f0f0f0;">8/7/2023</div><div class="c n g" style="left:737px;width:51px;">0</div><div class="c n " style="left:789px;width:65px;background:#f0f0f0;">06:21</div><div class="c n g" style="left:855px;width:34px;">0</div><div class="c n g" style="left:890px;width:34px;">0</div><div class="c n g" style="left:925px;width:34px;">0</div><div class="c n g" style="left:960px;width:34px;">0</div><div class="c n " style="left:995px;width:34px;background:#f0f0f0;">102</div><div class="c n " style="left:1030px;width:34px;background:#f0f0f0;">106</div><div class="c n " style="left:1065px;width:34px;background:#f0f0f0;">105</div><div class="c n " style="left:1100px;width:34px;background:#f0f0f0;">99</div><div class="c n g" style="left:1135px;width:34px;">0</div><div class="c n g" style="left:1170px;width:34px;">0</div><div class="c n g" style="left:1205px;width:34px;">0</div><div class="c n g" style="left:1240px;width:34px;">0</div><div class="c n " style="left:1275px;width:34px;background:#f0f0f0;">4.5</div><div class="c n " style="left:1310px;width:34px;background:#f0f0f0;">4.5</div><div class="c n " style="left:1345px;width:34px;background:#f0f0f0;">4.7</div><div class="c n " style="left:1380px;width:34px;background:#f0f0f0;">4.6</div><div class="c n " style="left:1415px;width:34px;background:#f0f0f0;">0</div><div class="c n " style="left:1450px;width:34px;background:#f0f0f0;">0</div><div class="c n " style="left:1485px;width:34px;background:#f0f0f0;">0</div><div class="c n " style="left:1520px;width:34px;background:#f0f0f0;">0</div><div class="c n " style="left:1555px;width:6px;background:#f0f0f0;"></div></div><div class="r sel" style="left:299px;top:481px;width:1561px;background:#b4c8ec;height:21px"><div class="c" style="left:0;width:15px;height:21px;background:linear-gradient(#f8f8f8,#e3e3e3);border-left:1px solid #a9a9a9;border-right:1px solid #a9a9a9;border-bottom:1px solid #a9a9a9;"></div><div class="c n " style="left:15px;width:69px;background:#fff;color:#000;">58</div><div class="c n " style="left:85px;width:69px;background:#3165c4;">343</div><div class="c l " style="left:155px;width:109px;background:#3165c4;">8/6/2023 9:04 PM</div><div class="c n g" style="left:267px;width:49px;">0</div><div class="c n g" style="left:317px;width:34px;">0</div><div class="c n g" style="left:352px;width:34px;">0</div><div class="c n g" style="left:387px;width:34px;">0</div><div class="c n g" style="left:422px;width:34px;">0</div><div class="c n " style="left:457px;width:49px;background:#3165c4;">1.1</div><div class="c n " style="left:507px;width:79px;background:#3165c4;">41</div><div class="c n " style="left:587px;width:72px;background:#3165c4;">51</div><div class="c l " style="left:660px;width:76px;background:#3165c4;">8/6/2023</div><div class="c n rd" style="left:737px;width:51px;color:#000;">10</div><div class="c n " style="left:789px;width:65px;background:#3165c4;">13:52</div><div class="c n g" style="left:855px;width:34px;">0</div><div class="c n g" style="left:890px;width:34px;">0</div><div class="c n g" style="left:925px;width:34px;">0</div><div class="c n g" style="left:960px;width:34px;">0</div><div class="c n " style="left:995px;width:34px;background:#3165c4;">100</div><div class="c n " style="left:1030px;width:34px;background:#3165c4;">103</div><div class="c n " style="left:1065px;width:34px;background:#3165c4;">109</div><div class="c n " style="left:1100px;width:34px;background:#3165c4;">105</div><div class="c n g" style="left:1135px;width:34px;">0</div><div class="c n g" style="left:1170px;width:34px;">0</div><div class="c n g" style="left:1205px;width:34px;">0</div><div class="c n g" style="left:1240px;width:34px;">0</div><div class="c n " style="left:1275px;width:34px;background:#3165c4;">3.6</div><div class="c n " style="left:1310px;width:34px;background:#3165c4;">3.6</div><div class="c n " style="left:1345px;width:34px;background:#3165c4;">3.8</div><div class="c n " style="left:1380px;width:34px;background:#3165c4;">3.6</div><div class="c n " style="left:1415px;width:34px;background:#3165c4;">382</div><div class="c n " style="left:1450px;width:34px;background:#3165c4;">0</div><div class="c n " style="left:1485px;width:34px;background:#3165c4;">0</div><div class="c n " style="left:1520px;width:34px;background:#3165c4;">0</div><div class="c n " style="left:1555px;width:6px;background:#3165c4;"></div></div><div class="a" style="left:314px;top:481px;width:1546px;height:1px;background:repeating-linear-gradient(90deg,#3165c4 0 1px,#fff 1px 2px)"></div><div class="a" style="left:314px;top:500px;width:1546px;height:1px;background:repeating-linear-gradient(90deg,#3165c4 0 1px,#fff 1px 2px)"></div><div class="a" style="left:314px;top:481px;width:1px;height:20px;background:repeating-linear-gradient(180deg,#3165c4 0 1px,#fff 1px 2px)"></div><svg class="a" style="left:303px;top:486px" width="8" height="10"><path d="M1.5,1 L6,5 L1.5,9" fill="none" stroke="#333" stroke-width="2.2"/></svg><div class="r" style="left:299px;top:502px;width:1561px;background:#d5dce8;height:21px"><div class="c" style="left:0;width:15px;height:21px;background:linear-gradient(#f8f8f8,#e3e3e3);border-left:1px solid #a9a9a9;border-right:1px solid #a9a9a9;border-bottom:1px solid #a9a9a9;"></div><div class="c n " style="left:15px;width:69px;background:#f0f0f0;">12</div><div class="c n " style="left:85px;width:69px;background:#f0f0f0;">323</div><div class="c l " style="left:155px;width:109px;background:#f0f0f0;">8/6/2023 8:36 PM</div><div class="c n g" style="left:267px;width:49px;">0</div><div class="c n g" style="left:317px;width:34px;">0</div><div class="c n g" style="left:352px;width:34px;">0</div><div class="c n g" style="left:387px;width:34px;">0</div><div class="c n g" style="left:422px;width:34px;">0</div><div class="c n " style="left:457px;width:49px;background:#f0f0f0;">1.1</div><div class="c n " style="left:507px;width:79px;background:#f0f0f0;">50</div><div class="c n " style="left:587px;width:72px;background:#f0f0f0;">45</div><div class="c l " style="left:660px;width:76px;background:#f0f0f0;">8/6/2023</div><div class="c n rd" style="left:737px;width:51px;">5</div><div class="c n " style="left:789px;width:65px;background:#f0f0f0;">12:38</div><div class="c n g" style="left:855px;width:34px;">0</div><div class="c n g" style="left:890px;width:34px;">0</div><div class="c n g" style="left:925px;width:34px;">0</div><div class="c n g" style="left:960px;width:34px;">0</div><div class="c n " style="left:995px;width:34px;background:#f0f0f0;">88</div><div class="c n " style="left:1030px;width:34px;background:#f0f0f0;">0</div><div class="c n " style="left:1065px;width:34px;background:#f0f0f0;">87</div><div class="c n " style="left:1100px;width:34px;background:#f0f0f0;">92</div><div class="c n g" style="left:1135px;width:34px;">0</div><div class="c n g" style="left:1170px;width:34px;">0</div><div class="c n g" style="left:1205px;width:34px;">0</div><div class="c n g" style="left:1240px;width:34px;">0</div><div class="c n " style="left:1275px;width:34px;background:#f0f0f0;">4.9</div><div class="c n " style="left:1310px;width:34px;background:#f0f0f0;"></div><div class="c n " style="left:1345px;width:34px;background:#f0f0f0;">5.0</div><div class="c n " style="left:1380px;width:34px;background:#f0f0f0;">5.0</div><div class="c n " style="left:1415px;width:34px;background:#f0f0f0;">0</div><div class="c n " style="left:1450px;width:34px;background:#f0f0f0;"></div><div class="c n " style="left:1485px;width:34px;background:#f0f0f0;">0</div><div class="c n " style="left:1520px;width:34px;background:#f0f0f0;">0</div><div class="c n " style="left:1555px;width:6px;background:#f0f0f0;"></div></div><div class="r" style="left:299px;top:523px;width:1561px;background:#d5dce8;height:21px"><div class="c" style="left:0;width:15px;height:21px;background:linear-gradient(#f8f8f8,#e3e3e3);border-left:1px solid #a9a9a9;border-right:1px solid #a9a9a9;border-bottom:1px solid #a9a9a9;"></div><div class="c n " style="left:15px;width:69px;background:#fff;">96</div><div class="c n " style="left:85px;width:69px;background:#fff;">10</div><div class="c l " style="left:155px;width:109px;background:#fff;">8/6/2023 9:59 PM</div><div class="c n g" style="left:267px;width:49px;">0</div><div class="c n g" style="left:317px;width:34px;">0</div><div class="c n g" style="left:352px;width:34px;">0</div><div class="c n g" style="left:387px;width:34px;">0</div><div class="c n g" style="left:422px;width:34px;">0</div><div class="c n " style="left:457px;width:49px;background:#fff;">1.1</div><div class="c n " style="left:507px;width:79px;background:#fff;"></div><div class="c n " style="left:587px;width:72px;background:#fff;"></div><div class="c l " style="left:660px;width:76px;background:#fff;">8/4/2023</div><div class="c n rd" style="left:737px;width:51px;">3</div><div class="c n " style="left:789px;width:65px;background:#fff;">12:30</div><div class="c n g" style="left:855px;width:34px;">0</div><div class="c n g" style="left:890px;width:34px;">0</div><div class="c n g" style="left:925px;width:34px;">0</div><div class="c n g" style="left:960px;width:34px;">0</div><div class="c n " style="left:995px;width:34px;background:#fff;">149</div><div class="c n " style="left:1030px;width:34px;background:#fff;">104</div><div class="c n " style="left:1065px;width:34px;background:#fff;">113</div><div class="c n " style="left:1100px;width:34px;background:#fff;">102</div><div class="c n g" style="left:1135px;width:34px;">0</div><div class="c n g" style="left:1170px;width:34px;">0</div><div class="c n g" style="left:1205px;width:34px;">0</div><div class="c n g" style="left:1240px;width:34px;">0</div><div class="c n " style="left:1275px;width:34px;background:#fff;">0.0</div><div class="c n " style="left:1310px;width:34px;background:#fff;">4.3</div><div class="c n " style="left:1345px;width:34px;background:#fff;">4.4</div><div class="c n " style="left:1380px;width:34px;background:#fff;">4.4</div><div class="c n " style="left:1415px;width:34px;background:#fff;">373</div><div class="c n " style="left:1450px;width:34px;background:#fff;">0</div><div class="c n " style="left:1485px;width:34px;background:#fff;">0</div><div class="c n " style="left:1520px;width:34px;background:#fff;">0</div><div class="c n " style="left:1555px;width:6px;background:#fff;"></div></div><div class="r" style="left:299px;top:544px;width:1561px;background:#d5dce8;height:21px"><div class="c" style="left:0;width:15px;height:21px;background:linear-gradient(#f8f8f8,#e3e3e3);border-left:1px solid #a9a9a9;border-right:1px solid #a9a9a9;border-bottom:1px solid #a9a9a9;"></div><div class="c n " style="left:15px;width:69px;background:#f0f0f0;">14</div><div class="c n " style="left:85px;width:69px;background:#f0f0f0;">246</div><div class="c l " style="left:155px;width:109px;background:#f0f0f0;">8/6/2023 2:33 PM</div><div class="c n g" style="left:267px;width:49px;">0</div><div class="c n g" style="left:317px;width:34px;">0</div><div class="c n g" style="left:352px;width:34px;">0</div><div class="c n g" style="left:387px;width:34px;">0</div><div class="c n g" style="left:422px;width:34px;">0</div><div class="c n " style="left:457px;width:49px;background:#f0f0f0;">1.1</div><div class="c n " style="left:507px;width:79px;background:#f0f0f0;">31</div><div class="c n " style="left:587px;width:72px;background:#f0f0f0;">20</div><div class="c l " style="left:660px;width:76px;background:#f0f0f0;">8/6/2023</div><div class="c n y" style="left:737px;width:51px;">3</div><div class="c n " style="left:789px;width:65px;background:#f0f0f0;">11:10</div><div class="c n g" style="left:855px;width:34px;">0</div><div class="c n g" style="left:890px;width:34px;">0</div><div class="c n g" style="left:925px;width:34px;">0</div><div class="c n g" style="left:960px;width:34px;">0</div><div class="c n " style="left:995px;width:34px;background:#f0f0f0;">93</div><div class="c n " style="left:1030px;width:34px;background:#f0f0f0;">117</div><div class="c n " style="left:1065px;width:34px;background:#f0f0f0;">98</div><div class="c n " style="left:1100px;width:34px;background:#f0f0f0;">111</div><div class="c n g" style="left:1135px;width:34px;">0</div><div class="c n g" style="left:1170px;width:34px;">0</div><div class="c n y" style="left:1205px;width:34px;">1</div><div class="c n g" style="left:1240px;width:34px;">0</div><div class="c n " style="left:1275px;width:34px;background:#f0f0f0;">4.7</div><div class="c n " style="left:1310px;width:34px;background:#f0f0f0;">4.9</div><div class="c n " style="left:1345px;width:34px;background:#f0f0f0;">5.0</div><div class="c n " style="left:1380px;width:34px;background:#f0f0f0;">5.0</div><div class="c n " style="left:1415px;width:34px;background:#f0f0f0;">0</div><div class="c n " style="left:1450px;width:34px;background:#f0f0f0;">0</div><div class="c n " style="left:1485px;width:34px;background:#f0f0f0;">0</div><div class="c n " style="left:1520px;width:34px;background:#f0f0f0;">0</div><div class="c n " style="left:1555px;width:6px;background:#f0f0f0;"></div></div><div class="r" style="left:299px;top:565px;width:1561px;background:#d5dce8;height:21px"><div class="c" style="left:0;width:15px;height:21px;background:linear-gradient(#f8f8f8,#e3e3e3);border-left:1px solid #a9a9a9;border-right:1px solid #a9a9a9;border-bottom:1px solid #a9a9a9;"></div><div class="c n " style="left:15px;width:69px;background:#fff;">10</div><div class="c n " style="left:85px;width:69px;background:#fff;">18</div><div class="c l " style="left:155px;width:109px;background:#fff;">8/6/2023 7:24 PM</div><div class="c n g" style="left:267px;width:49px;">0</div><div class="c n g" style="left:317px;width:34px;">0</div><div class="c n g" style="left:352px;width:34px;">0</div><div class="c n g" style="left:387px;width:34px;">0</div><div class="c n g" style="left:422px;width:34px;">0</div><div class="c n " style="left:457px;width:49px;background:#fff;">1.0</div><div class="c n " style="left:507px;width:79px;background:#fff;">29</div><div class="c n " style="left:587px;width:72px;background:#fff;">17</div><div class="c l " style="left:660px;width:76px;background:#fff;">8/6/2023</div><div class="c n y" style="left:737px;width:51px;">8</div><div class="c n " style="left:789px;width:65px;background:#fff;">14:43</div><div class="c n g" style="left:855px;width:34px;">0</div><div class="c n g" style="left:890px;width:34px;">0</div><div class="c n g" style="left:925px;width:34px;">0</div><div class="c n g" style="left:960px;width:34px;">0</div><div class="c n " style="left:995px;width:34px;background:#fff;">130</div><div class="c n " style="left:1030px;width:34px;background:#fff;">116</div><div class="c n " style="left:1065px;width:34px;background:#fff;">116</div><div class="c n " style="left:1100px;width:34px;background:#fff;">118</div><div class="c n g" style="left:1135px;width:34px;">0</div><div class="c n g" style="left:1170px;width:34px;">0</div><div class="c n g" style="left:1205px;width:34px;">0</div><div class="c n g" style="left:1240px;width:34px;">0</div><div class="c n " style="left:1275px;width:34px;background:#fff;">4.9</div><div class="c n " style="left:1310px;width:34px;background:#fff;">4.8</div><div class="c n " style="left:1345px;width:34px;background:#fff;">4.8</div><div class="c n " style="left:1380px;width:34px;background:#fff;">4.8</div><div class="c n " style="left:1415px;width:34px;background:#fff;">0</div><div class="c n " style="left:1450px;width:34px;background:#fff;">0</div><div class="c n " style="left:1485px;width:34px;background:#fff;">0</div><div class="c n " style="left:1520px;width:34px;background:#fff;">0</div><div class="c n " style="left:1555px;width:6px;background:#fff;"></div></div><div class="r" style="left:299px;top:586px;width:1561px;background:#d5dce8;height:21px"><div class="c" style="left:0;width:15px;height:21px;background:linear-gradient(#f8f8f8,#e3e3e3);border-left:1px solid #a9a9a9;border-right:1px solid #a9a9a9;border-bottom:1px solid #a9a9a9;"></div><div class="c n " style="left:15px;width:69px;background:#f0f0f0;">56</div><div class="c n " style="left:85px;width:69px;background:#f0f0f0;">234</div><div class="c l " style="left:155px;width:109px;background:#f0f0f0;">8/6/2023 3:59 PM</div><div class="c n g" style="left:267px;width:49px;">0</div><div class="c n g" style="left:317px;width:34px;">0</div><div class="c n g" style="left:352px;width:34px;">0</div><div class="c n g" style="left:387px;width:34px;">0</div><div class="c n g" style="left:422px;width:34px;">0</div><div class="c n " style="left:457px;width:49px;background:#f0f0f0;">1.0</div><div class="c n " style="left:507px;width:79px;background:#f0f0f0;">321</div><div class="c n " style="left:587px;width:72px;background:#f0f0f0;">208</div><div class="c l " style="left:660px;width:76px;background:#f0f0f0;">8/6/2023</div><div class="c n y" style="left:737px;width:51px;">4</div><div class="c n " style="left:789px;width:65px;background:#f0f0f0;">11:54</div><div class="c n g" style="left:855px;width:34px;">0</div><div class="c n g" style="left:890px;width:34px;">0</div><div class="c n g" style="left:925px;width:34px;">0</div><div class="c n g" style="left:960px;width:34px;">0</div><div class="c n " style="left:995px;width:34px;background:#f0f0f0;">100</div><div class="c n " style="left:1030px;width:34px;background:#f0f0f0;">100</div><div class="c n " style="left:1065px;width:34px;background:#f0f0f0;">109</div><div class="c n " style="left:1100px;width:34px;background:#f0f0f0;">103</div><div class="c n y" style="left:1135px;width:34px;">1</div><div class="c n g" style="left:1170px;width:34px;">0</div><div class="c n g" style="left:1205px;width:34px;">0</div><div class="c n g" style="left:1240px;width:34px;">0</div><div class="c n " style="left:1275px;width:34px;background:#f0f0f0;">4.4</div><div class="c n " style="left:1310px;width:34px;background:#f0f0f0;">4.3</div><div class="c n " style="left:1345px;width:34px;background:#f0f0f0;">4.5</div><div class="c n " style="left:1380px;width:34px;background:#f0f0f0;">4.5</div><div class="c n " style="left:1415px;width:34px;background:#f0f0f0;">0</div><div class="c n " style="left:1450px;width:34px;background:#f0f0f0;">0</div><div class="c n " style="left:1485px;width:34px;background:#f0f0f0;">0</div><div class="c n " style="left:1520px;width:34px;background:#f0f0f0;">0</div><div class="c n " style="left:1555px;width:6px;background:#f0f0f0;"></div></div><div class="r" style="left:299px;top:607px;width:1561px;background:#d5dce8;height:21px"><div class="c" style="left:0;width:15px;height:21px;background:linear-gradient(#f8f8f8,#e3e3e3);border-left:1px solid #a9a9a9;border-right:1px solid #a9a9a9;border-bottom:1px solid #a9a9a9;"></div><div class="c n " style="left:15px;width:69px;background:#fff;">5</div><div class="c n " style="left:85px;width:69px;background:#fff;">166</div><div class="c l " style="left:155px;width:109px;background:#fff;">8/6/2023 4:51 PM</div><div class="c n g" style="left:267px;width:49px;">0</div><div class="c n g" style="left:317px;width:34px;">0</div><div class="c n g" style="left:352px;width:34px;">0</div><div class="c n g" style="left:387px;width:34px;">0</div><div class="c n g" style="left:422px;width:34px;">0</div><div class="c n " style="left:457px;width:49px;background:#fff;">1.0</div><div class="c n " style="left:507px;width:79px;background:#fff;">22</div><div class="c n " style="left:587px;width:72px;background:#fff;">8</div><div class="c l " style="left:660px;width:76px;background:#fff;">8/6/2023</div><div class="c n y" style="left:737px;width:51px;">2</div><div class="c n " style="left:789px;width:65px;background:#fff;">09:19</div><div class="c n g" style="left:855px;width:34px;">0</div><div class="c n g" style="left:890px;width:34px;">0</div><div class="c n g" style="left:925px;width:34px;">0</div><div class="c n g" style="left:960px;width:34px;">0</div><div class="c n " style="left:995px;width:34px;background:#fff;">112</div><div class="c n " style="left:1030px;width:34px;background:#fff;">0</div><div class="c n " style="left:1065px;width:34px;background:#fff;">106</div><div class="c n " style="left:1100px;width:34px;background:#fff;">109</div><div class="c n g" style="left:1135px;width:34px;">0</div><div class="c n g" style="left:1170px;width:34px;">0</div><div class="c n g" style="left:1205px;width:34px;">0</div><div class="c n g" style="left:1240px;width:34px;">0</div><div class="c n " style="left:1275px;width:34px;background:#fff;">5.0</div><div class="c n " style="left:1310px;width:34px;background:#fff;"></div><div class="c n " style="left:1345px;width:34px;background:#fff;">4.8</div><div class="c n " style="left:1380px;width:34px;background:#fff;">5.0</div><div class="c n " style="left:1415px;width:34px;background:#fff;">0</div><div class="c n " style="left:1450px;width:34px;background:#fff;"></div><div class="c n " style="left:1485px;width:34px;background:#fff;">0</div><div class="c n " style="left:1520px;width:34px;background:#fff;">0</div><div class="c n " style="left:1555px;width:6px;background:#fff;"></div></div><div class="r" style="left:299px;top:628px;width:1561px;background:#d5dce8;height:21px"><div class="c" style="left:0;width:15px;height:21px;background:linear-gradient(#f8f8f8,#e3e3e3);border-left:1px solid #a9a9a9;border-right:1px solid #a9a9a9;border-bottom:1px solid #a9a9a9;"></div><div class="c n " style="left:15px;width:69px;background:#f0f0f0;">48</div><div class="c n " style="left:85px;width:69px;background:#f0f0f0;">63</div><div class="c l " style="left:155px;width:109px;background:#f0f0f0;">8/6/2023 9:27 PM</div><div class="c n g" style="left:267px;width:49px;">0</div><div class="c n g" style="left:317px;width:34px;">0</div><div class="c n g" style="left:352px;width:34px;">0</div><div class="c n g" style="left:387px;width:34px;">0</div><div class="c n g" style="left:422px;width:34px;">0</div><div class="c n " style="left:457px;width:49px;background:#f0f0f0;">1.0</div><div class="c n " style="left:507px;width:79px;background:#f0f0f0;">20</div><div class="c n " style="left:587px;width:72px;background:#f0f0f0;">8</div><div class="c l " style="left:660px;width:76px;background:#f0f0f0;">8/6/2023</div><div class="c n g" style="left:737px;width:51px;">0</div><div class="c n " style="left:789px;width:65px;background:#f0f0f0;">07:15</div><div class="c n g" style="left:855px;width:34px;">0</div><div class="c n g" style="left:890px;width:34px;">0</div><div class="c n g" style="left:925px;width:34px;">0</div><div class="c n g" style="left:960px;width:34px;">0</div><div class="c n " style="left:995px;width:34px;background:#f0f0f0;">107</div><div class="c n " style="left:1030px;width:34px;background:#f0f0f0;">101</div><div class="c n " style="left:1065px;width:34px;background:#f0f0f0;">104</div><div class="c n " style="left:1100px;width:34px;background:#f0f0f0;">104</div><div class="c n g" style="left:1135px;width:34px;">0</div><div class="c n g" style="left:1170px;width:34px;">0</div><div class="c n g" style="left:1205px;width:34px;">0</div><div class="c n g" style="left:1240px;width:34px;">0</div><div class="c n " style="left:1275px;width:34px;background:#f0f0f0;">4.8</div><div class="c n " style="left:1310px;width:34px;background:#f0f0f0;">5.0</div><div class="c n " style="left:1345px;width:34px;background:#f0f0f0;">4.9</div><div class="c n " style="left:1380px;width:34px;background:#f0f0f0;">5.0</div><div class="c n " style="left:1415px;width:34px;background:#f0f0f0;">0</div><div class="c n " style="left:1450px;width:34px;background:#f0f0f0;">0</div><div class="c n " style="left:1485px;width:34px;background:#f0f0f0;">0</div><div class="c n " style="left:1520px;width:34px;background:#f0f0f0;">0</div><div class="c n " style="left:1555px;width:6px;background:#f0f0f0;"></div></div><div class="r" style="left:299px;top:649px;width:1561px;background:#d5dce8;height:21px"><div class="c" style="left:0;width:15px;height:21px;background:linear-gradient(#f8f8f8,#e3e3e3);border-left:1px solid #a9a9a9;border-right:1px solid #a9a9a9;border-bottom:1px solid #a9a9a9;"></div><div class="c n " style="left:15px;width:69px;background:#fff;">68</div><div class="c n " style="left:85px;width:69px;background:#fff;">35</div><div class="c l " style="left:155px;width:109px;background:#fff;">8/6/2023 10:05 PM</div><div class="c n g" style="left:267px;width:49px;">0</div><div class="c n g" style="left:317px;width:34px;">0</div><div class="c n g" style="left:352px;width:34px;">0</div><div class="c n g" style="left:387px;width:34px;">0</div><div class="c n g" style="left:422px;width:34px;">0</div><div class="c n " style="left:457px;width:49px;background:#fff;">1.0</div><div class="c n " style="left:507px;width:79px;background:#fff;">27</div><div class="c n " style="left:587px;width:72px;background:#fff;">20</div><div class="c l " style="left:660px;width:76px;background:#fff;">8/6/2023</div><div class="c n g" style="left:737px;width:51px;">0</div><div class="c n " style="left:789px;width:65px;background:#fff;">06:11</div><div class="c n g" style="left:855px;width:34px;">0</div><div class="c n y" style="left:890px;width:34px;">2</div><div class="c n g" style="left:925px;width:34px;">0</div><div class="c n g" style="left:960px;width:34px;">0</div><div class="c n " style="left:995px;width:34px;background:#fff;">99</div><div class="c n " style="left:1030px;width:34px;background:#fff;">96</div><div class="c n " style="left:1065px;width:34px;background:#fff;">101</div><div class="c n " style="left:1100px;width:34px;background:#fff;">100</div><div class="c n y" style="left:1135px;width:34px;">1</div><div class="c n y" style="left:1170px;width:34px;">1</div><div class="c n g" style="left:1205px;width:34px;">0</div><div class="c n g" style="left:1240px;width:34px;">0</div><div class="c n " style="left:1275px;width:34px;background:#fff;">4.7</div><div class="c n " style="left:1310px;width:34px;background:#fff;">4.9</div><div class="c n " style="left:1345px;width:34px;background:#fff;">5.0</div><div class="c n " style="left:1380px;width:34px;background:#fff;">5.0</div><div class="c n " style="left:1415px;width:34px;background:#fff;">0</div><div class="c n " style="left:1450px;width:34px;background:#fff;">0</div><div class="c n " style="left:1485px;width:34px;background:#fff;">0</div><div class="c n " style="left:1520px;width:34px;background:#fff;">0</div><div class="c n " style="left:1555px;width:6px;background:#fff;"></div></div><div class="r" style="left:299px;top:670px;width:1561px;background:#d5dce8;height:21px"><div class="c" style="left:0;width:15px;height:21px;background:linear-gradient(#f8f8f8,#e3e3e3);border-left:1px solid #a9a9a9;border-right:1px solid #a9a9a9;border-bottom:1px solid #a9a9a9;"></div><div class="c n " style="left:15px;width:69px;background:#f0f0f0;">39</div><div class="c n " style="left:85px;width:69px;background:#f0f0f0;">188</div><div class="c l " style="left:155px;width:109px;background:#f0f0f0;">8/6/2023 10:42 PM</div><div class="c n g" style="left:267px;width:49px;">0</div><div class="c n g" style="left:317px;width:34px;">0</div><div class="c n y" style="left:352px;width:34px;">1</div><div class="c n g" style="left:387px;width:34px;">0</div><div class="c n g" style="left:422px;width:34px;">0</div><div class="c n " style="left:457px;width:49px;background:#f0f0f0;">1.0</div><div class="c n " style="left:507px;width:79px;background:#f0f0f0;">37</div><div class="c n " style="left:587px;width:72px;background:#f0f0f0;">20</div><div class="c l " style="left:660px;width:76px;background:#f0f0f0;">8/6/2023</div><div class="c n y" style="left:737px;width:51px;">1</div><div class="c n " style="left:789px;width:65px;background:#f0f0f0;">08:42</div><div class="c n g" style="left:855px;width:34px;">0</div><div class="c n y" style="left:890px;width:34px;">1</div><div class="c n g" style="left:925px;width:34px;">0</div><div class="c n g" style="left:960px;width:34px;">0</div><div class="c n " style="left:995px;width:34px;background:#f0f0f0;">104</div><div class="c n " style="left:1030px;width:34px;background:#f0f0f0;">112</div><div class="c n " style="left:1065px;width:34px;background:#f0f0f0;">111</div><div class="c n " style="left:1100px;width:34px;background:#f0f0f0;">117</div><div class="c n g" style="left:1135px;width:34px;">0</div><div class="c n y" style="left:1170px;width:34px;">2</div><div class="c n y" style="left:1205px;width:34px;">2</div><div class="c n y" style="left:1240px;width:34px;">1</div><div class="c n " style="left:1275px;width:34px;background:#f0f0f0;">4.4</div><div class="c n " style="left:1310px;width:34px;background:#f0f0f0;">4.4</div><div class="c n " style="left:1345px;width:34px;background:#f0f0f0;">4.3</div><div class="c n " style="left:1380px;width:34px;background:#f0f0f0;">4.6</div><div class="c n " style="left:1415px;width:34px;background:#f0f0f0;">0</div><div class="c n " style="left:1450px;width:34px;background:#f0f0f0;">0</div><div class="c n " style="left:1485px;width:34px;background:#f0f0f0;">0</div><div class="c n " style="left:1520px;width:34px;background:#f0f0f0;">0</div><div class="c n " style="left:1555px;width:6px;background:#f0f0f0;"></div></div><div class="r" style="left:299px;top:691px;width:1561px;background:#d5dce8;height:21px"><div class="c" style="left:0;width:15px;height:21px;background:linear-gradient(#f8f8f8,#e3e3e3);border-left:1px solid #a9a9a9;border-right:1px solid #a9a9a9;border-bottom:1px solid #a9a9a9;"></div><div class="c n " style="left:15px;width:69px;background:#fff;">41</div><div class="c n " style="left:85px;width:69px;background:#fff;">208</div><div class="c l " style="left:155px;width:109px;background:#fff;">8/6/2023 1:45 PM</div><div class="c n g" style="left:267px;width:49px;">0</div><div class="c n g" style="left:317px;width:34px;">0</div><div class="c n g" style="left:352px;width:34px;">0</div><div class="c n g" style="left:387px;width:34px;">0</div><div class="c n g" style="left:422px;width:34px;">0</div><div class="c n " style="left:457px;width:49px;background:#fff;">1.0</div><div class="c n " style="left:507px;width:79px;background:#fff;">123</div><div class="c n " style="left:587px;width:72px;background:#fff;">171</div><div class="c l " style="left:660px;width:76px;background:#fff;">8/6/2023</div><div class="c n g" style="left:737px;width:51px;">0</div><div class="c n " style="left:789px;width:65px;background:#fff;">09:21</div><div class="c n g" style="left:855px;width:34px;">0</div><div class="c n g" style="left:890px;width:34px;">0</div><div class="c n g" style="left:925px;width:34px;">0</div><div class="c n g" style="left:960px;width:34px;">0</div><div class="c n " style="left:995px;width:34px;background:#fff;">101</div><div class="c n " style="left:1030px;width:34px;background:#fff;">102</div><div class="c n " style="left:1065px;width:34px;background:#fff;">100</div><div class="c n " style="left:1100px;width:34px;background:#fff;">100</div><div class="c n g" style="left:1135px;width:34px;">0</div><div class="c n g" style="left:1170px;width:34px;">0</div><div class="c n g" style="left:1205px;width:34px;">0</div><div class="c n g" style="left:1240px;width:34px;">0</div><div class="c n " style="left:1275px;width:34px;background:#fff;">4.0</div><div class="c n " style="left:1310px;width:34px;background:#fff;">4.0</div><div class="c n " style="left:1345px;width:34px;background:#fff;">3.9</div><div class="c n " style="left:1380px;width:34px;background:#fff;">4.2</div><div class="c n " style="left:1415px;width:34px;background:#fff;">0</div><div class="c n " style="left:1450px;width:34px;background:#fff;">0</div><div class="c n " style="left:1485px;width:34px;background:#fff;">0</div><div class="c n " style="left:1520px;width:34px;background:#fff;">0</div><div class="c n " style="left:1555px;width:6px;background:#fff;"></div></div><div class="r" style="left:299px;top:712px;width:1561px;background:#d5dce8;height:21px"><div class="c" style="left:0;width:15px;height:21px;background:linear-gradient(#f8f8f8,#e3e3e3);border-left:1px solid #a9a9a9;border-right:1px solid #a9a9a9;border-bottom:1px solid #a9a9a9;"></div><div class="c n " style="left:15px;width:69px;background:#f0f0f0;">67</div><div class="c n " style="left:85px;width:69px;background:#f0f0f0;">133</div><div class="c l " style="left:155px;width:109px;background:#f0f0f0;">8/6/2023 10:12 PM</div><div class="c n g" style="left:267px;width:49px;">0</div><div class="c n g" style="left:317px;width:34px;">0</div><div class="c n g" style="left:352px;width:34px;">0</div><div class="c n g" style="left:387px;width:34px;">0</div><div class="c n g" style="left:422px;width:34px;">0</div><div class="c n " style="left:457px;width:49px;background:#f0f0f0;">1.0</div><div class="c n " style="left:507px;width:79px;background:#f0f0f0;">39</div><div class="c n " style="left:587px;width:72px;background:#f0f0f0;">8</div><div class="c l " style="left:660px;width:76px;background:#f0f0f0;">8/6/2023</div><div class="c n g" style="left:737px;width:51px;">0</div><div class="c n " style="left:789px;width:65px;background:#f0f0f0;">08:03</div><div class="c n g" style="left:855px;width:34px;">0</div><div class="c n g" style="left:890px;width:34px;">0</div><div class="c n g" style="left:925px;width:34px;">0</div><div class="c n g" style="left:960px;width:34px;">0</div><div class="c n " style="left:995px;width:34px;background:#f0f0f0;">102</div><div class="c n " style="left:1030px;width:34px;background:#f0f0f0;">85</div><div class="c n " style="left:1065px;width:34px;background:#f0f0f0;">104</div><div class="c n " style="left:1100px;width:34px;background:#f0f0f0;">91</div><div class="c n g" style="left:1135px;width:34px;">0</div><div class="c n g" style="left:1170px;width:34px;">0</div><div class="c n g" style="left:1205px;width:34px;">0</div><div class="c n g" style="left:1240px;width:34px;">0</div><div class="c n " style="left:1275px;width:34px;background:#f0f0f0;">5.0</div><div class="c n " style="left:1310px;width:34px;background:#f0f0f0;">4.9</div><div class="c n " style="left:1345px;width:34px;background:#f0f0f0;">5.1</div><div class="c n " style="left:1380px;width:34px;background:#f0f0f0;">5.0</div><div class="c n " style="left:1415px;width:34px;background:#f0f0f0;">0</div><div class="c n " style="left:1450px;width:34px;background:#f0f0f0;">0</div><div class="c n " style="left:1485px;width:34px;background:#f0f0f0;">0</div><div class="c n " style="left:1520px;width:34px;background:#f0f0f0;">0</div><div class="c n " style="left:1555px;width:6px;background:#f0f0f0;"></div></div><div class="r" style="left:299px;top:733px;width:1561px;background:#d5dce8;height:21px"><div class="c" style="left:0;width:15px;height:21px;background:linear-gradient(#f8f8f8,#e3e3e3);border-left:1px solid #a9a9a9;border-right:1px solid #a9a9a9;border-bottom:1px solid #a9a9a9;"></div><div class="c n " style="left:15px;width:69px;background:#fff;">9</div><div class="c n " style="left:85px;width:69px;background:#fff;">258</div><div class="c l " style="left:155px;width:109px;background:#fff;">8/6/2023 10:38 PM</div><div class="c n g" style="left:267px;width:49px;">0</div><div class="c n g" style="left:317px;width:34px;">0</div><div class="c n g" style="left:352px;width:34px;">0</div><div class="c n g" style="left:387px;width:34px;">0</div><div class="c n g" style="left:422px;width:34px;">0</div><div class="c n " style="left:457px;width:49px;background:#fff;">1.0</div><div class="c n " style="left:507px;width:79px;background:#fff;">26</div><div class="c n " style="left:587px;width:72px;background:#fff;">14</div><div class="c l " style="left:660px;width:76px;background:#fff;">8/6/2023</div><div class="c n g" style="left:737px;width:51px;">0</div><div class="c n " style="left:789px;width:65px;background:#fff;">07:01</div><div class="c n g" style="left:855px;width:34px;">0</div><div class="c n g" style="left:890px;width:34px;">0</div><div class="c n g" style="left:925px;width:34px;">0</div><div class="c n y" style="left:960px;width:34px;">1</div><div class="c n " style="left:995px;width:34px;background:#fff;">95</div><div class="c n " style="left:1030px;width:34px;background:#fff;">96</div><div class="c n " style="left:1065px;width:34px;background:#fff;">131</div><div class="c n " style="left:1100px;width:34px;background:#fff;">102</div><div class="c n g" style="left:1135px;width:34px;">0</div><div class="c n y" style="left:1170px;width:34px;">1</div><div class="c n y" style="left:1205px;width:34px;">1</div><div class="c n g" style="left:1240px;width:34px;">0</div><div class="c n " style="left:1275px;width:34px;background:#fff;">4.7</div><div class="c n " style="left:1310px;width:34px;background:#fff;">4.9</div><div class="c n " style="left:1345px;width:34px;background:#fff;">4.8</div><div class="c n " style="left:1380px;width:34px;background:#fff;">4.8</div><div class="c n " style="left:1415px;width:34px;background:#fff;">0</div><div class="c n " style="left:1450px;width:34px;background:#fff;">0</div><div class="c n " style="left:1485px;width:34px;background:#fff;">0</div><div class="c n " style="left:1520px;width:34px;background:#fff;">0</div><div class="c n " style="left:1555px;width:6px;background:#fff;"></div></div><div class="r" style="left:299px;top:754px;width:1561px;background:#d5dce8;height:21px"><div class="c" style="left:0;width:15px;height:21px;background:linear-gradient(#f8f8f8,#e3e3e3);border-left:1px solid #a9a9a9;border-right:1px solid #a9a9a9;border-bottom:1px solid #a9a9a9;"></div><div class="c n " style="left:15px;width:69px;background:#f0f0f0;">27</div><div class="c n " style="left:85px;width:69px;background:#f0f0f0;">270</div><div class="c l " style="left:155px;width:109px;background:#f0f0f0;">8/6/2023 10:51 PM</div><div class="c n g" style="left:267px;width:49px;">0</div><div class="c n g" style="left:317px;width:34px;">0</div><div class="c n g" style="left:352px;width:34px;">0</div><div class="c n g" style="left:387px;width:34px;">0</div><div class="c n g" style="left:422px;width:34px;">0</div><div class="c n " style="left:457px;width:49px;background:#f0f0f0;">1.0</div><div class="c n " style="left:507px;width:79px;background:#f0f0f0;">60</div><div class="c n " style="left:587px;width:72px;background:#f0f0f0;">54</div><div class="c l " style="left:660px;width:76px;background:#f0f0f0;">8/6/2023</div><div class="c n y" style="left:737px;width:51px;">3</div><div class="c n " style="left:789px;width:65px;background:#f0f0f0;">10:50</div><div class="c n g" style="left:855px;width:34px;">0</div><div class="c n g" style="left:890px;width:34px;">0</div><div class="c n g" style="left:925px;width:34px;">0</div><div class="c n g" style="left:960px;width:34px;">0</div><div class="c n " style="left:995px;width:34px;background:#f0f0f0;">100</div><div class="c n " style="left:1030px;width:34px;background:#f0f0f0;">97</div><div class="c n " style="left:1065px;width:34px;background:#f0f0f0;">98</div><div class="c n " style="left:1100px;width:34px;background:#f0f0f0;">97</div><div class="c n g" style="left:1135px;width:34px;">0</div><div class="c n g" style="left:1170px;width:34px;">0</div><div class="c n g" style="left:1205px;width:34px;">0</div><div class="c n g" style="left:1240px;width:34px;">0</div><div class="c n " style="left:1275px;width:34px;background:#f0f0f0;">4.4</div><div class="c n " style="left:1310px;width:34px;background:#f0f0f0;">4.5</div><div class="c n " style="left:1345px;width:34px;background:#f0f0f0;">4.5</div><div class="c n " style="left:1380px;width:34px;background:#f0f0f0;">4.6</div><div class="c n " style="left:1415px;width:34px;background:#f0f0f0;">0</div><div class="c n " style="left:1450px;width:34px;background:#f0f0f0;">0</div><div class="c n " style="left:1485px;width:34px;background:#f0f0f0;">0</div><div class="c n " style="left:1520px;width:34px;background:#f0f0f0;">0</div><div class="c n " style="left:1555px;width:6px;background:#f0f0f0;"></div></div><div class="r" style="left:299px;top:775px;width:1561px;background:#d5dce8;height:21px"><div class="c" style="left:0;width:15px;height:21px;background:linear-gradient(#f8f8f8,#e3e3e3);border-left:1px solid #a9a9a9;border-right:1px solid #a9a9a9;border-bottom:1px solid #a9a9a9;"></div><div class="c n " style="left:15px;width:69px;background:#fff;">29</div><div class="c n " style="left:85px;width:69px;background:#fff;">236</div><div class="c l " style="left:155px;width:109px;background:#fff;">8/6/2023 7:00 PM</div><div class="c n g" style="left:267px;width:49px;">0</div><div class="c n g" style="left:317px;width:34px;">0</div><div class="c n g" style="left:352px;width:34px;">0</div><div class="c n g" style="left:387px;width:34px;">0</div><div class="c n g" style="left:422px;width:34px;">0</div><div class="c n " style="left:457px;width:49px;background:#fff;">1.0</div><div class="c n " style="left:507px;width:79px;background:#fff;">13</div><div class="c n " style="left:587px;width:72px;background:#fff;">2</div><div class="c l " style="left:660px;width:76px;background:#fff;">8/6/2023</div><div class="c n g" style="left:737px;width:51px;">0</div><div class="c n " style="left:789px;width:65px;background:#fff;">06:45</div><div class="c n g" style="left:855px;width:34px;">0</div><div class="c n y" style="left:890px;width:34px;">2</div><div class="c n g" style="left:925px;width:34px;">0</div><div class="c n g" style="left:960px;width:34px;">0</div><div class="c n " style="left:995px;width:34px;background:#fff;">112</div><div class="c n " style="left:1030px;width:34px;background:#fff;">108</div><div class="c n " style="left:1065px;width:34px;background:#fff;">101</div><div class="c n " style="left:1100px;width:34px;background:#fff;">108</div><div class="c n g" style="left:1135px;width:34px;">0</div><div class="c n g" style="left:1170px;width:34px;">0</div><div class="c n g" style="left:1205px;width:34px;">0</div><div class="c n g" style="left:1240px;width:34px;">0</div><div class="c n " style="left:1275px;width:34px;background:#fff;">4.7</div><div class="c n " style="left:1310px;width:34px;background:#fff;">4.8</div><div class="c n " style="left:1345px;width:34px;background:#fff;">4.8</div><div class="c n " style="left:1380px;width:34px;background:#fff;">4.7</div><div class="c n " style="left:1415px;width:34px;background:#fff;">0</div><div class="c n " style="left:1450px;width:34px;background:#fff;">0</div><div class="c n " style="left:1485px;width:34px;background:#fff;">0</div><div class="c n " style="left:1520px;width:34px;background:#fff;">0</div><div class="c n " style="left:1555px;width:6px;background:#fff;"></div></div><div class="r" style="left:299px;top:796px;width:1561px;background:#d5dce8;height:21px"><div class="c" style="left:0;width:15px;height:21px;background:linear-gradient(#f8f8f8,#e3e3e3);border-left:1px solid #a9a9a9;border-right:1px solid #a9a9a9;border-bottom:1px solid #a9a9a9;"></div><div class="c n " style="left:15px;width:69px;background:#f0f0f0;">99</div><div class="c n " style="left:85px;width:69px;background:#f0f0f0;">17</div><div class="c l " style="left:155px;width:109px;background:#f0f0f0;">8/6/2023 8:45 PM</div><div class="c n g" style="left:267px;width:49px;">0</div><div class="c n g" style="left:317px;width:34px;">0</div><div class="c n g" style="left:352px;width:34px;">0</div><div class="c n g" style="left:387px;width:34px;">0</div><div class="c n g" style="left:422px;width:34px;">0</div><div class="c n " style="left:457px;width:49px;background:#f0f0f0;">1.0</div><div class="c n " style="left:507px;width:79px;background:#f0f0f0;">43</div><div class="c n " style="left:587px;width:72px;background:#f0f0f0;">48</div><div class="c l " style="left:660px;width:76px;background:#f0f0f0;">8/6/2023</div><div class="c n g" style="left:737px;width:51px;">0</div><div class="c n " style="left:789px;width:65px;background:#f0f0f0;">07:41</div><div class="c n g" style="left:855px;width:34px;">0</div><div class="c n g" style="left:890px;width:34px;">0</div><div class="c n g" style="left:925px;width:34px;">0</div><div class="c n g" style="left:960px;width:34px;">0</div><div class="c n " style="left:995px;width:34px;background:#f0f0f0;">101</div><div class="c n " style="left:1030px;width:34px;background:#f0f0f0;">100</div><div class="c n " style="left:1065px;width:34px;background:#f0f0f0;">107</div><div class="c n " style="left:1100px;width:34px;background:#f0f0f0;">110</div><div class="c n y" style="left:1135px;width:34px;">1</div><div class="c n g" style="left:1170px;width:34px;">0</div><div class="c n g" style="left:1205px;width:34px;">0</div><div class="c n g" style="left:1240px;width:34px;">0</div><div class="c n " style="left:1275px;width:34px;background:#f0f0f0;">4.4</div><div class="c n " style="left:1310px;width:34px;background:#f0f0f0;">4.3</div><div class="c n " style="left:1345px;width:34px;background:#f0f0f0;">4.6</div><div class="c n " style="left:1380px;width:34px;background:#f0f0f0;">4.6</div><div class="c n " style="left:1415px;width:34px;background:#f0f0f0;">0</div><div class="c n " style="left:1450px;width:34px;background:#f0f0f0;">0</div><div class="c n " style="left:1485px;width:34px;background:#f0f0f0;">0</div><div class="c n " style="left:1520px;width:34px;background:#f0f0f0;">0</div><div class="c n " style="left:1555px;width:6px;background:#f0f0f0;"></div></div><div class="r" style="left:299px;top:817px;width:1561px;background:#d5dce8;height:21px"><div class="c" style="left:0;width:15px;height:21px;background:linear-gradient(#f8f8f8,#e3e3e3);border-left:1px solid #a9a9a9;border-right:1px solid #a9a9a9;border-bottom:1px solid #a9a9a9;"></div><div class="c n " style="left:15px;width:69px;background:#fff;">44</div><div class="c n " style="left:85px;width:69px;background:#fff;">258</div><div class="c l " style="left:155px;width:109px;background:#fff;">8/6/2023 5:38 PM</div><div class="c n g" style="left:267px;width:49px;">0</div><div class="c n g" style="left:317px;width:34px;">0</div><div class="c n g" style="left:352px;width:34px;">0</div><div class="c n g" style="left:387px;width:34px;">0</div><div class="c n g" style="left:422px;width:34px;">0</div><div class="c n " style="left:457px;width:49px;background:#fff;">1.0</div><div class="c n " style="left:507px;width:79px;background:#fff;">135</div><div class="c n " style="left:587px;width:72px;background:#fff;">45</div><div class="c l " style="left:660px;width:76px;background:#fff;">8/6/2023</div><div class="c n g" style="left:737px;width:51px;">0</div><div class="c n " style="left:789px;width:65px;background:#fff;">09:08</div><div class="c n g" style="left:855px;width:34px;">0</div><div class="c n g" style="left:890px;width:34px;">0</div><div class="c n g" style="left:925px;width:34px;">0</div><div class="c n g" style="left:960px;width:34px;">0</div><div class="c n " style="left:995px;width:34px;background:#fff;">102</div><div class="c n " style="left:1030px;width:34px;background:#fff;">101</div><div class="c n " style="left:1065px;width:34px;background:#fff;">99</div><div class="c n " style="left:1100px;width:34px;background:#fff;">99</div><div class="c n g" style="left:1135px;width:34px;">0</div><div class="c n g" style="left:1170px;width:34px;">0</div><div class="c n g" style="left:1205px;width:34px;">0</div><div class="c n g" style="left:1240px;width:34px;">0</div><div class="c n " style="left:1275px;width:34px;background:#fff;">4.2</div><div class="c n " style="left:1310px;width:34px;background:#fff;">4.3</div><div class="c n " style="left:1345px;width:34px;background:#fff;">4.3</div><div class="c n " style="left:1380px;width:34px;background:#fff;">4.3</div><div class="c n " style="left:1415px;width:34px;background:#fff;">0</div><div class="c n " style="left:1450px;width:34px;background:#fff;">0</div><div class="c n " style="left:1485px;width:34px;background:#fff;">0</div><div class="c n " style="left:1520px;width:34px;background:#fff;">0</div><div class="c n " style="left:1555px;width:6px;background:#fff;"></div></div><div class="r" style="left:299px;top:838px;width:1561px;background:#d5dce8;height:21px"><div class="c" style="left:0;width:15px;height:21px;background:linear-gradient(#f8f8f8,#e3e3e3);border-left:1px solid #a9a9a9;border-right:1px solid #a9a9a9;border-bottom:1px solid #a9a9a9;"></div><div class="c n " style="left:15px;width:69px;background:#f0f0f0;">42</div><div class="c n " style="left:85px;width:69px;background:#f0f0f0;">481</div><div class="c l " style="left:155px;width:109px;background:#f0f0f0;">8/6/2023 8:08 PM</div><div class="c n g" style="left:267px;width:49px;">0</div><div class="c n g" style="left:317px;width:34px;">0</div><div class="c n g" style="left:352px;width:34px;">0</div><div class="c n g" style="left:387px;width:34px;">0</div><div class="c n g" style="left:422px;width:34px;">0</div><div class="c n " style="left:457px;width:49px;background:#f0f0f0;">1.0</div><div class="c n " style="left:507px;width:79px;background:#f0f0f0;">13</div><div class="c n " style="left:587px;width:72px;background:#f0f0f0;">11</div><div class="c l " style="left:660px;width:76px;background:#f0f0f0;">8/6/2023</div><div class="c n g" style="left:737px;width:51px;">0</div><div class="c n " style="left:789px;width:65px;background:#f0f0f0;">06:44</div><div class="c n g" style="left:855px;width:34px;">0</div><div class="c n g" style="left:890px;width:34px;">0</div><div class="c n y" style="left:925px;width:34px;">1</div><div class="c n g" style="left:960px;width:34px;">0</div><div class="c n " style="left:995px;width:34px;background:#f0f0f0;">93</div><div class="c n " style="left:1030px;width:34px;background:#f0f0f0;">96</div><div class="c n " style="left:1065px;width:34px;background:#f0f0f0;">90</div><div class="c n " style="left:1100px;width:34px;background:#f0f0f0;">98</div><div class="c n g" style="left:1135px;width:34px;">0</div><div class="c n g" style="left:1170px;width:34px;">0</div><div class="c n y" style="left:1205px;width:34px;">1</div><div class="c n g" style="left:1240px;width:34px;">0</div><div class="c n " style="left:1275px;width:34px;background:#f0f0f0;">4.7</div><div class="c n " style="left:1310px;width:34px;background:#f0f0f0;">4.8</div><div class="c n " style="left:1345px;width:34px;background:#f0f0f0;">4.8</div><div class="c n " style="left:1380px;width:34px;background:#f0f0f0;">4.9</div><div class="c n " style="left:1415px;width:34px;background:#f0f0f0;">0</div><div class="c n " style="left:1450px;width:34px;background:#f0f0f0;">0</div><div class="c n " style="left:1485px;width:34px;background:#f0f0f0;">0</div><div class="c n " style="left:1520px;width:34px;background:#f0f0f0;">0</div><div class="c n " style="left:1555px;width:6px;background:#f0f0f0;"></div></div><div class="r" style="left:299px;top:859px;width:1561px;background:#d5dce8;height:21px"><div class="c" style="left:0;width:15px;height:21px;background:linear-gradient(#f8f8f8,#e3e3e3);border-left:1px solid #a9a9a9;border-right:1px solid #a9a9a9;border-bottom:1px solid #a9a9a9;"></div><div class="c n " style="left:15px;width:69px;background:#fff;">21</div><div class="c n " style="left:85px;width:69px;background:#fff;">228</div><div class="c l " style="left:155px;width:109px;background:#fff;">8/7/2023 12:09 AM</div><div class="c n g" style="left:267px;width:49px;">0</div><div class="c n g" style="left:317px;width:34px;">0</div><div class="c n g" style="left:352px;width:34px;">0</div><div class="c n g" style="left:387px;width:34px;">0</div><div class="c n g" style="left:422px;width:34px;">0</div><div class="c n " style="left:457px;width:49px;background:#fff;">1.0</div><div class="c n " style="left:507px;width:79px;background:#fff;">161</div><div class="c n " style="left:587px;width:72px;background:#fff;">122</div><div class="c l " style="left:660px;width:76px;background:#fff;">8/7/2023</div><div class="c n y" style="left:737px;width:51px;">1</div><div class="c n " style="left:789px;width:65px;background:#fff;">07:31</div><div class="c n g" style="left:855px;width:34px;">0</div><div class="c n g" style="left:890px;width:34px;">0</div><div class="c n g" style="left:925px;width:34px;">0</div><div class="c n y" style="left:960px;width:34px;">2</div><div class="c n " style="left:995px;width:34px;background:#fff;">103</div><div class="c n " style="left:1030px;width:34px;background:#fff;">110</div><div class="c n " style="left:1065px;width:34px;background:#fff;">103</div><div class="c n " style="left:1100px;width:34px;background:#fff;">106</div><div class="c n g" style="left:1135px;width:34px;">0</div><div class="c n g" style="left:1170px;width:34px;">0</div><div class="c n g" style="left:1205px;width:34px;">0</div><div class="c n g" style="left:1240px;width:34px;">0</div><div class="c n " style="left:1275px;width:34px;background:#fff;">4.9</div><div class="c n " style="left:1310px;width:34px;background:#fff;">4.9</div><div class="c n " style="left:1345px;width:34px;background:#fff;">4.8</div><div class="c n " style="left:1380px;width:34px;background:#fff;">4.6</div><div class="c n " style="left:1415px;width:34px;background:#fff;">0</div><div class="c n " style="left:1450px;width:34px;background:#fff;">0</div><div class="c n " style="left:1485px;width:34px;background:#fff;">0</div><div class="c n " style="left:1520px;width:34px;background:#fff;">0</div><div class="c n " style="left:1555px;width:6px;background:#fff;"></div></div><div class="r" style="left:299px;top:880px;width:1561px;background:#d5dce8;height:21px"><div class="c" style="left:0;width:15px;height:21px;background:linear-gradient(#f8f8f8,#e3e3e3);border-left:1px solid #a9a9a9;border-right:1px solid #a9a9a9;border-bottom:1px solid #a9a9a9;"></div><div class="c n " style="left:15px;width:69px;background:#f0f0f0;">83</div><div class="c n " style="left:85px;width:69px;background:#f0f0f0;">35</div><div class="c l " style="left:155px;width:109px;background:#f0f0f0;">8/6/2023 7:10 PM</div><div class="c n g" style="left:267px;width:49px;">0</div><div class="c n g" style="left:317px;width:34px;">0</div><div class="c n g" style="left:352px;width:34px;">0</div><div class="c n g" style="left:387px;width:34px;">0</div><div class="c n g" style="left:422px;width:34px;">0</div><div class="c n " style="left:457px;width:49px;background:#f0f0f0;">1.0</div><div class="c n " style="left:507px;width:79px;background:#f0f0f0;">61</div><div class="c n " style="left:587px;width:72px;background:#f0f0f0;">22</div><div class="c l " style="left:660px;width:76px;background:#f0f0f0;">8/6/2023</div><div class="c n g" style="left:737px;width:51px;">0</div><div class="c n " style="left:789px;width:65px;background:#f0f0f0;">07:46</div><div class="c n g" style="left:855px;width:34px;">0</div><div class="c n g" style="left:890px;width:34px;">0</div><div class="c n g" style="left:925px;width:34px;">0</div><div class="c n g" style="left:960px;width:34px;">0</div><div class="c n " style="left:995px;width:34px;background:#f0f0f0;">101</div><div class="c n " style="left:1030px;width:34px;background:#f0f0f0;">103</div><div class="c n " style="left:1065px;width:34px;background:#f0f0f0;">109</div><div class="c n " style="left:1100px;width:34px;background:#f0f0f0;">110</div><div class="c n g" style="left:1135px;width:34px;">0</div><div class="c n g" style="left:1170px;width:34px;">0</div><div class="c n g" style="left:1205px;width:34px;">0</div><div class="c n g" style="left:1240px;width:34px;">0</div><div class="c n " style="left:1275px;width:34px;background:#f0f0f0;">4.8</div><div class="c n " style="left:1310px;width:34px;background:#f0f0f0;">4.7</div><div class="c n " style="left:1345px;width:34px;background:#f0f0f0;">4.9</div><div class="c n " style="left:1380px;width:34px;background:#f0f0f0;">4.8</div><div class="c n " style="left:1415px;width:34px;background:#f0f0f0;">0</div><div class="c n " style="left:1450px;width:34px;background:#f0f0f0;">0</div><div class="c n " style="left:1485px;width:34px;background:#f0f0f0;">0</div><div class="c n " style="left:1520px;width:34px;background:#f0f0f0;">0</div><div class="c n " style="left:1555px;width:6px;background:#f0f0f0;"></div></div><div class="a" style="left:563px;top:275px;width:3px;height:626px;background:#b0b0b0"></div><div class="a" style="left:296px;top:272px;width:1564px;height:652px;border-left:1px solid #b4b4b4;border-top:1px solid #b4b4b4"></div><div class="a" style="left:297px;top:273px;width:1563px;height:651px;border-left:1px solid #e8e8e8;border-top:1px solid #e8e8e8"></div><div class="a" style="left:298px;top:274px;width:1562px;height:650px;border-left:1px solid #a0a0a0;border-top:1px solid #a0a0a0"></div><div class="a" style="left:299px;top:901px;width:1561px;height:23px;background:linear-gradient(#f5f5f5,#eaeaea);border-top:1px solid #fafafa"></div><div class="a" style="left:299px;top:902px;width:1561px;height:1px;background:#b4b4b4"></div><div id="t89" class="t" style="left:340px;top:196px;transform:scaleX(0.979);">一括編集</div><div id="t90" class="t" style="left:445px;top:196px;transform:scaleX(0.979);">一括入力</div><div id="t91" class="t" style="left:550px;top:196px;transform:scaleX(0.708);">セレクション</div><div class="sep" style="left:661px;top:183px;height:39px"></div><div id="t92" class="t" style="left:668px;top:196px;transform:scaleX(0.722);">グラフを開く</div><div id="t93" class="t" style="left:730px;top:196px;transform:scaleX(0.772);">選択した牛のカウンタをリセット</div><div id="t94" class="t" style="left:879px;top:196px;transform:scaleX(0.761);">すべての牛のカウンタをリセット</div><div class="sep" style="left:1023px;top:183px;height:39px"></div><div class="sep" style="left:1115px;top:183px;height:39px"></div><div class="cb" style="left:1123px;top:192px;width:150px;height:20px"></div><div id="t95" class="t" style="left:1243px;top:196px;color:#333;transform:scaleX(1.000);">検索</div><div class="cb" style="left:1285px;top:192px;width:150px;height:20px"><i></i></div><div id="t96" class="t" style="left:1289px;top:196px;transform:scaleX(0.771);">セレクションなし</div><div class="cb" style="left:1447px;top:192px;width:150px;height:20px"><i></i></div><div id="t97" class="t" style="left:1451px;top:196px;transform:scaleX(0.861);">すべての牛群</div><div class="cb" style="left:1609px;top:192px;width:150px;height:20px"><i></i></div><div id="t98" class="t" style="left:1613px;top:196px;transform:scaleX(0.771);">すべてのグループ</div><div id="t99" class="t" style="left:398px;top:245px;transform:scaleX(0.688);">フォント</div><div class="sep" style="left:449px;top:234px;height:34px"></div><div class="a" style="left:363px;top:235px;width:32px;height:33px;background:#fff"></div><svg class="a" style="left:0;top:0" width="1860" height="924"><defs>
<linearGradient id="gblue" x1="0" y1="0" x2="0" y2="1"><stop offset="0" stop-color="#1e88f0"/><stop offset="1" stop-color="#0054b4"/></linearGradient>
<linearGradient id="gwhite" x1="0" y1="0" x2="1" y2="1"><stop offset="0" stop-color="#fafafa"/><stop offset="1" stop-color="#d0d0d0"/></linearGradient>
<linearGradient id="gbottle" x1="0" y1="0" x2="0" y2="1"><stop offset="0" stop-color="#fafafa"/><stop offset="0.55" stop-color="#d0d0d0"/><stop offset="0.57" stop-color="#3a3a3a"/><stop offset="1" stop-color="#2a2a2a"/></linearGradient>
<linearGradient id="ggold" x1="0" y1="0" x2="1" y2="1"><stop offset="0" stop-color="#fff2a0"/><stop offset="0.5" stop-color="#f0c040"/><stop offset="1" stop-color="#c88a10"/></linearGradient>
<linearGradient id="gdoc" x1="0" y1="0" x2="1" y2="1"><stop offset="0" stop-color="#ffffff"/><stop offset="1" stop-color="#cfe0f4"/></linearGradient>
<linearGradient id="ggear" x1="0" y1="0" x2="0" y2="1"><stop offset="0" stop-color="#f4f4f4"/><stop offset="1" stop-color="#9a9a9a"/></linearGradient>
<linearGradient id="gprint" x1="0" y1="0" x2="0" y2="1"><stop offset="0" stop-color="#f2f2f2"/><stop offset="1" stop-color="#b8b8b8"/></linearGradient>
<linearGradient id="ggreen" x1="0" y1="0" x2="0" y2="1"><stop offset="0" stop-color="#7cc828"/><stop offset="0.5" stop-color="#52a820"/><stop offset="1" stop-color="#2e8010"/></linearGradient>
<linearGradient id="gyellow" x1="0" y1="0" x2="0" y2="1"><stop offset="0" stop-color="#f8dc68"/><stop offset="1" stop-color="#e0a818"/></linearGradient>
<radialGradient id="grefresh" cx="0.4" cy="0.3" r="0.8"><stop offset="0" stop-color="#b8f070"/><stop offset="0.6" stop-color="#58b020"/><stop offset="1" stop-color="#2a7a08"/></radialGradient>
</defs><path d="M28.5,54.5 L39.0,65.66 L36.06,65.66 L36.06,72.5 L31.125,72.5 L31.125,66.56 L25.875,66.56 L25.875,72.5 L20.94,72.5 L20.94,65.66 L18.0,65.66 Z" fill="url(#gblue)"/><g transform="translate(7,64) scale(1.0)" fill="none" stroke="#383838" stroke-linecap="round"><path d="M3,20.7 C5,17.5 8,16 11.5,15.8 C16,15.5 19,14.5 21,12 C22.5,9.5 20,7.5 17.2,6.2 L10.7,2.9" stroke="#fff" stroke-opacity="0.7" stroke-width="4.8"/><path d="M3,20.7 C5,17.5 8,16 11.5,15.8 C16,15.5 19,14.5 21,12 C22.5,9.5 20,7.5 17.2,6.2 L10.7,2.9" stroke-width="2.8"/><path d="M6.8,1.5 Q4,3 4.8,6" stroke-width="1.7"/><circle cx="0.8" cy="6" r="1.2" fill="#383838" stroke="none"/><circle cx="10" cy="8.8" r="1.2" fill="#383838" stroke="none"/></g><rect x="59" y="56" width="21" height="24" fill="url(#gwhite)" stroke="#333" stroke-width="2"/><rect x="62" y="59" width="3" height="2" fill="none" stroke="#333" stroke-width="1"/><line x1="67.5" y1="60" x2="77" y2="60" stroke="#333" stroke-width="1.2"/><rect x="62" y="64" width="3" height="2" fill="none" stroke="#333" stroke-width="1"/><line x1="67.5" y1="65" x2="77" y2="65" stroke="#333" stroke-width="1.2"/><rect x="62" y="69" width="3" height="2" fill="none" stroke="#333" stroke-width="1"/><line x1="67.5" y1="70" x2="77" y2="70" stroke="#333" stroke-width="1.2"/><line x1="67.5" y1="75" x2="77" y2="75" stroke="#333" stroke-width="1.2"/><g transform="translate(49,64) scale(1.0)" fill="none" stroke="#383838" stroke-linecap="round"><path d="M3,20.7 C5,17.5 8,16 11.5,15.8 C16,15.5 19,14.5 21,12 C22.5,9.5 20,7.5 17.2,6.2 L10.7,2.9" stroke="#fff" stroke-opacity="0.7" stroke-width="4.8"/><path d="M3,20.7 C5,17.5 8,16 11.5,15.8 C16,15.5 19,14.5 21,12 C22.5,9.5 20,7.5 17.2,6.2 L10.7,2.9" stroke-width="2.8"/><path d="M6.8,1.5 Q4,3 4.8,6" stroke-width="1.7"/><circle cx="0.8" cy="6" r="1.2" fill="#383838" stroke="none"/><circle cx="10" cy="8.8" r="1.2" fill="#383838" stroke="none"/></g><rect x="93" y="57" width="28" height="20" rx="2" fill="url(#gwhite)" stroke="#333" stroke-width="2.5"/><rect x="104.5" y="77" width="5" height="3" fill="#333"/><rect x="93.5" y="80.5" width="27" height="5" fill="#eee" stroke="#333" stroke-width="1.8"/><path d="M107,60 L115.0,68.06 L112.76,68.06 L112.76,73 L109.0,73 L109.0,68.71000000000001 L105.0,68.71000000000001 L105.0,73 L101.24,73 L101.24,68.06 L99.0,68.06 Z" fill="url(#gblue)"/><rect x="133" y="55" width="12" height="14" fill="#3a3a3a"/><rect x="134.5" y="57" width="9" height="2" fill="#ddd"/><rect x="134.5" y="61" width="2" height="2" fill="#eee"/><rect x="137.5" y="61" width="2" height="2" fill="#eee"/><rect x="140.5" y="61" width="2" height="2" fill="#eee"/><rect x="134.5" y="64" width="2" height="2" fill="#eee"/><rect x="137.5" y="64" width="2" height="2" fill="#eee"/><rect x="140.5" y="64" width="2" height="2" fill="#eee"/><path d="M138,69 V82.5 H148" fill="none" stroke="#3a3a3a" stroke-width="2.2"/><rect x="147.8" y="63.8" width="16.4" height="12.6" fill="url(#gblue)" stroke="#3a3a3a" stroke-width="1.7"/><rect x="154" y="76.5" width="4" height="3.5" fill="#3a3a3a"/><rect x="147.8" y="80.8" width="16.4" height="4.6" fill="#eee" stroke="#3a3a3a" stroke-width="1.6"/><path d="M184.5,55.5 H206.5 V80.5 H196 C194,76 190,71 184.5,68 Z" fill="url(#gyellow)" stroke="#333" stroke-width="1.8"/><rect x="202" y="62" width="3.5" height="4" fill="#f4d870" stroke="#333" stroke-width="0.8"/><rect x="202" y="69" width="3.5" height="4" fill="#f4d870" stroke="#333" stroke-width="0.8"/><rect x="202" y="76" width="3.5" height="3" fill="#f4d870" stroke="#333" stroke-width="0.8"/><g transform="translate(176,64) scale(1.0)" fill="none" stroke="#383838" stroke-linecap="round"><path d="M3,20.7 C5,17.5 8,16 11.5,15.8 C16,15.5 19,14.5 21,12 C22.5,9.5 20,7.5 17.2,6.2 L10.7,2.9" stroke="#fff" stroke-opacity="0.7" stroke-width="4.8"/><path d="M3,20.7 C5,17.5 8,16 11.5,15.8 C16,15.5 19,14.5 21,12 C22.5,9.5 20,7.5 17.2,6.2 L10.7,2.9" stroke-width="2.8"/><path d="M6.8,1.5 Q4,3 4.8,6" stroke-width="1.7"/><circle cx="0.8" cy="6" r="1.2" fill="#383838" stroke="none"/><circle cx="10" cy="8.8" r="1.2" fill="#383838" stroke="none"/></g><path d="M221.5,66 V86" stroke="#3a3a3a" stroke-width="2.2"/><path d="M217,81.5 H246" stroke="#3a3a3a" stroke-width="2.2"/><path d="M245,77.5 L250,81.5 L245,85.5Z" fill="#3a3a3a"/><path d="M217,55.5 L220,57.5 L222.5,55 L224,58.5 Q229,59 232,62.5 L232.5,65 Q230,67 226,66.5 L221,66.5 L217.5,70.5 Z" fill="#1a78e0"/><circle cx="224.5" cy="61" r="1" fill="#fff"/><circle cx="224.5" cy="76.5" r="1.6" fill="#1a78e0"/><circle cx="231.5" cy="72" r="1.6" fill="#1a78e0"/><circle cx="236.5" cy="66.5" r="1.6" fill="#1a78e0"/><circle cx="244" cy="61.5" r="1.6" fill="#1a78e0"/><circle cx="245.5" cy="73" r="1.6" fill="#1a78e0"/><path d="M263.5,58 V86" stroke="#3a3a3a" stroke-width="2.2"/><path d="M259.5,62 L263.5,55 L267.5,62Z" fill="#3a3a3a"/><path d="M259,81.5 H288" stroke="#3a3a3a" stroke-width="2.2"/><path d="M287,77.5 L292,81.5 L287,85.5Z" fill="#3a3a3a"/><circle cx="267" cy="76.5" r="1.6" fill="#1a78e0"/><circle cx="270" cy="63.5" r="1.6" fill="#1a78e0"/><circle cx="274" cy="72" r="1.6" fill="#1a78e0"/><circle cx="279" cy="66.5" r="1.6" fill="#1a78e0"/><circle cx="286" cy="61.5" r="1.6" fill="#1a78e0"/><circle cx="288" cy="73" r="1.6" fill="#1a78e0"/><rect x="300.5" y="52.5" width="139" height="37" fill="#fff" stroke="#7a7a7a" stroke-width="1"/><path d="M391.5,64 L394.5,61 L397.5,64Z" fill="#222"/><path d="M391.5,79 L394.5,82 L397.5,79Z" fill="#222"/><rect x="405" y="61" width="30" height="19" fill="#eee" stroke="#2a2a2a" stroke-width="2"/><line x1="420.0" y1="61" x2="420.0" y2="80" stroke="#2a2a2a" stroke-width="1.5"/><rect x="406.5" y="62.5" width="13.0" height="16" fill="#e8ecf0"/><path d="M409,66 h2 v-2 h6 v2 h2 v2 h-2 v3 q3,1 3,5 v1 h-12 v-1 q0,-4 3,-5 v-3 h-2z" fill="url(#gblue)"/><line x1="423.0" y1="65.0" x2="432" y2="65.0" stroke="#333" stroke-width="1"/><line x1="423.0" y1="68.4" x2="432" y2="68.4" stroke="#333" stroke-width="1"/><line x1="423.0" y1="71.8" x2="432" y2="71.8" stroke="#333" stroke-width="1"/><line x1="423.0" y1="75.2" x2="432" y2="75.2" stroke="#333" stroke-width="1"/><path d="M453,55.8 H460.5 V61 L463.5,60 L462,63 V76 Q462,78 460,78 H453.5 Q451.5,78 451.5,76 V63 L450,60 L453,61 Z" fill="url(#gbottle)" stroke="#333" stroke-width="1.7" stroke-linejoin="round"/><circle cx="471" cy="76.5" r="9" fill="#fff" stroke="#e8894a" stroke-width="2"/><path d="M467,75 L470.5,78.5 L475,73.5" fill="none" stroke="#555" stroke-width="1.3"/><g transform="translate(491,65) scale(0.95)" fill="none" stroke="#383838" stroke-linecap="round"><path d="M3,20.7 C5,17.5 8,16 11.5,15.8 C16,15.5 19,14.5 21,12 C22.5,9.5 20,7.5 17.2,6.2 L10.7,2.9" stroke="#fff" stroke-opacity="0.7" stroke-width="4.8"/><path d="M3,20.7 C5,17.5 8,16 11.5,15.8 C16,15.5 19,14.5 21,12 C22.5,9.5 20,7.5 17.2,6.2 L10.7,2.9" stroke-width="2.8"/><path d="M6.8,1.5 Q4,3 4.8,6" stroke-width="1.7"/><circle cx="0.8" cy="6" r="1.2" fill="#383838" stroke="none"/><circle cx="10" cy="8.8" r="1.2" fill="#383838" stroke="none"/></g><rect x="500.5" y="55.5" width="23" height="26" fill="#222"/><rect x="502.0" y="57" width="4" height="3" fill="#e01010"/><rect x="507.2" y="57" width="4" height="3" fill="#f4f000"/><rect x="512.4" y="57" width="4" height="3" fill="#f4f000"/><rect x="517.6" y="57" width="4" height="3" fill="#f4f000"/><rect x="502.0" y="61" width="4" height="3" fill="#108010"/><rect x="507.2" y="61" width="4" height="3" fill="#108010"/><rect x="512.4" y="61" width="4" height="3" fill="#108010"/><rect x="517.6" y="61" width="4" height="3" fill="#e01010"/><rect x="502.0" y="65" width="4" height="3" fill="#f4f000"/><rect x="507.2" y="65" width="4" height="3" fill="#e01010"/><rect x="512.4" y="65" width="4" height="3" fill="#f4f000"/><rect x="517.6" y="65" width="4" height="3" fill="#108010"/><rect x="502.0" y="69" width="4" height="3" fill="#108010"/><rect x="507.2" y="69" width="4" height="3" fill="#108010"/><rect x="512.4" y="69" width="4" height="3" fill="#108010"/><rect x="517.6" y="69" width="4" height="3" fill="#f4f000"/><rect x="502.0" y="73" width="4" height="3" fill="#108010"/><rect x="507.2" y="73" width="4" height="3" fill="#e01010"/><rect x="512.4" y="73" width="4" height="3" fill="#108010"/><rect x="517.6" y="73" width="4" height="3" fill="#f4f000"/><rect x="502.0" y="77" width="4" height="3" fill="#e01010"/><rect x="507.2" y="77" width="4" height="3" fill="#f4f000"/><rect x="512.4" y="77" width="4" height="3" fill="#f4f000"/><rect x="517.6" y="77" width="4" height="3" fill="#f4f000"/><path d="M534.1,75.2 L536.5,71 L537.6,73.8 L541,72.4 L548.8,78 L546,80.8 L540.4,82.9 L534.8,85.7 Z" fill="#1a78e0"/><circle cx="541" cy="76.2" r="0.9" fill="#fff"/><path d="M552,55.8 H559.5 V61 L562.5,60 L561,63 V76 Q561,78 559,78 H552.5 Q550.5,78 550.5,76 V63 L549,60 L552,61 Z" fill="url(#gbottle)" stroke="#333" stroke-width="1.7" stroke-linejoin="round"/><path d="M576,73 Q577,66 585,65.5 Q592,66 593,71 L597,72 V75 H576Z" fill="url(#gblue)"/><path d="M580,78 v4 M590,77 q1,4 -2,6 v3 M584,86 q-2,1 -3,0" fill="none" stroke="#333" stroke-width="2"/><g transform="translate(597.5,55.5) scale(0.92)"><path d="M-1,1 a1.5,1.5 0 0 1 2,0 C6,2 6,6 6.5,11 C7,14 9,15 9,17 H-9 C-9,15 -7,14 -6.5,11 C-6,6 -6,2 -1,1Z" fill="url(#ggold)" stroke="#b07810" stroke-width="0.8"/><circle cx="0" cy="18.5" r="2.2" fill="#e0a020" stroke="#a07010" stroke-width="0.6"/></g><rect x="627" y="56" width="21" height="24" fill="url(#gwhite)" stroke="#333" stroke-width="2"/><rect x="630" y="59" width="3" height="2" fill="none" stroke="#333" stroke-width="1"/><line x1="635.5" y1="60" x2="645" y2="60" stroke="#333" stroke-width="1.2"/><rect x="630" y="64" width="3" height="2" fill="none" stroke="#333" stroke-width="1"/><line x1="635.5" y1="65" x2="645" y2="65" stroke="#333" stroke-width="1.2"/><rect x="630" y="69" width="3" height="2" fill="none" stroke="#333" stroke-width="1"/><line x1="635.5" y1="70" x2="645" y2="70" stroke="#333" stroke-width="1.2"/><line x1="635.5" y1="75" x2="645" y2="75" stroke="#333" stroke-width="1.2"/><g transform="translate(629,63) scale(1.1)"><path d="M-1,1 a1.5,1.5 0 0 1 2,0 C6,2 6,6 6.5,11 C7,14 9,15 9,17 H-9 C-9,15 -7,14 -6.5,11 C-6,6 -6,2 -1,1Z" fill="url(#ggold)" stroke="#b07810" stroke-width="0.8"/><circle cx="0" cy="18.5" r="2.2" fill="#e0a020" stroke="#a07010" stroke-width="0.6"/></g><polygon points="674.0,55.5 677.5,64.7 687.3,65.2 679.6,71.3 682.2,80.8 674.0,75.4 665.8,80.8 668.4,71.3 660.7,65.2 670.5,64.7" fill="#dcdcdc" stroke="#bdbdbd" stroke-width="1"/><path d="M693,68.5 h6 l-3,3 z" fill="#777"/><g transform="translate(13,100) scale(0.9)" fill="none" stroke="#383838" stroke-linecap="round"><path d="M3,20.7 C5,17.5 8,16 11.5,15.8 C16,15.5 19,14.5 21,12 C22.5,9.5 20,7.5 17.2,6.2 L10.7,2.9" stroke="#fff" stroke-opacity="0.7" stroke-width="4.8"/><path d="M3,20.7 C5,17.5 8,16 11.5,15.8 C16,15.5 19,14.5 21,12 C22.5,9.5 20,7.5 17.2,6.2 L10.7,2.9" stroke-width="2.8"/><path d="M6.8,1.5 Q4,3 4.8,6" stroke-width="1.7"/><circle cx="0.8" cy="6" r="1.2" fill="#383838" stroke="none"/><circle cx="10" cy="8.8" r="1.2" fill="#383838" stroke="none"/></g><rect x="21" y="99" width="16" height="19" fill="#222"/><rect x="22.0" y="100.0" width="3" height="2.8" fill="#e01010"/><rect x="25.6" y="100.0" width="3" height="2.8" fill="#f4f000"/><rect x="29.2" y="100.0" width="3" height="2.8" fill="#f4f000"/><rect x="32.8" y="100.0" width="3" height="2.8" fill="#f4f000"/><rect x="22.0" y="103.5" width="3" height="2.8" fill="#108010"/><rect x="25.6" y="103.5" width="3" height="2.8" fill="#f4f000"/><rect x="29.2" y="103.5" width="3" height="2.8" fill="#108010"/><rect x="32.8" y="103.5" width="3" height="2.8" fill="#e01010"/><rect x="22.0" y="107.0" width="3" height="2.8" fill="#f4f000"/><rect x="25.6" y="107.0" width="3" height="2.8" fill="#e01010"/><rect x="29.2" y="107.0" width="3" height="2.8" fill="#108010"/><rect x="32.8" y="107.0" width="3" height="2.8" fill="#f4f000"/><rect x="22.0" y="110.5" width="3" height="2.8" fill="#108010"/><rect x="25.6" y="110.5" width="3" height="2.8" fill="#108010"/><rect x="29.2" y="110.5" width="3" height="2.8" fill="#f4f000"/><rect x="32.8" y="110.5" width="3" height="2.8" fill="#108010"/><rect x="22.0" y="114.0" width="3" height="2.8" fill="#f4f000"/><rect x="25.6" y="114.0" width="3" height="2.8" fill="#108010"/><rect x="29.2" y="114.0" width="3" height="2.8" fill="#e01010"/><rect x="32.8" y="114.0" width="3" height="2.8" fill="#f4f000"/><path d="M38.4,144 A13,13 0 1 0 40.5,162.2 L37,159.5 A8.8,8.8 0 1 1 35.5,147.3 Z" fill="url(#grefresh)" stroke="#3a8a18" stroke-width="0.6"/><path d="M33.5,147.5 L42,139.5 L44.5,154 Z" fill="#58b828" stroke="#3a8a18" stroke-width="0.6"/><path d="M281,152 h6 l-3,3 z" fill="#333"/><path d="M493,152 h6 l-3,3 z" fill="#333"/><path d="M531,138.5 H546.5 V163.5 H525.5 V144 Z" fill="url(#gdoc)" stroke="#4a86d0" stroke-width="1.2"/><path d="M525.5,144 H531 V138.5" fill="#fff" stroke="#9ab8e0" stroke-width="0.8"/><polygon points="551.5,157.5 551.4,158.7 549.1,159.4 548.8,160.3 550.2,162.2 549.5,163.3 547.2,162.7 546.5,163.4 546.8,165.7 545.6,166.3 543.9,164.6 543.0,164.8 542.0,167.0 540.8,166.9 540.1,164.6 539.2,164.3 537.2,165.7 536.2,165.0 536.8,162.7 536.1,162.0 533.8,162.2 533.2,161.1 534.9,159.4 534.7,158.5 532.5,157.5 532.6,156.3 534.9,155.6 535.2,154.7 533.8,152.8 534.5,151.7 536.8,152.3 537.5,151.6 537.2,149.3 538.4,148.7 540.1,150.4 541.0,150.2 542.0,148.0 543.2,148.1 543.9,150.4 544.8,150.7 546.8,149.3 547.8,150.0 547.2,152.3 547.9,153.0 550.2,152.8 550.8,153.9 549.1,155.6 549.3,156.5" fill="url(#ggear)" stroke="#777" stroke-width="0.8"/><circle cx="542" cy="157.5" r="3.2" fill="#d8d8d8" stroke="#6a6a6a" stroke-width="1.6"/><polygon points="571.3,150.5 575.8,139.7 591.2,140.4 584.9,153.0" fill="url(#gdoc)" stroke="#4a86d0" stroke-width="1.2"/><polygon points="563.3,156.1 571.6,150.5 594.4,150.2 587.7,155.0 582.1,158.9" fill="#e8e8e8" stroke="#9a9a9a" stroke-width="0.7"/><polygon points="563.3,156.0 582.1,158.9 582.1,166.3 563.3,161.4" fill="url(#gprint)" stroke="#8a8a8a" stroke-width="0.7"/><polygon points="582.0,159.0 594.7,150.5 594.7,158.6 582.0,166.3" fill="#a8a8a8" stroke="#888" stroke-width="0.7"/><polygon points="567.0,159.5 578.5,161.3 578.5,163.0 567.0,161.2" fill="#555"/><rect x="579.5" y="161" width="1.8" height="1.8" fill="#3c3"/><rect x="610.5" y="139.5" width="21" height="25" fill="url(#gdoc)" stroke="#4a86d0" stroke-width="1.2"/><line x1="622.5" y1="161.5" x2="618" y2="166.5" stroke="#c89828" stroke-width="3.4" stroke-linecap="round"/><line x1="622" y1="162" x2="626" y2="157.5" stroke="#2a3050" stroke-width="3"/><circle cx="630" cy="154" r="6.2" fill="#e4eef6" fill-opacity="0.85" stroke="#6a6a6a" stroke-width="1.6"/><g transform="translate(0,0)"><path d="M323.6,188.4 L331.2,194.6 Q332,197 329.5,197.6 L321.6,197.8" fill="none" stroke="#fff" stroke-opacity=".75" stroke-width="4" stroke-linecap="round"/><path d="M323.6,188.4 L331.2,194.6 Q332,197 329.5,197.6 L321.6,197.8" fill="none" stroke="#1c1c1c" stroke-width="2.2" stroke-linecap="round"/><circle cx="320" cy="189.2" r="1.7" fill="#444"/><circle cx="316.6" cy="191" r="1" fill="#222"/><rect x="323" y="192" width="1.8" height="1.8" fill="#111"/><path d="M317.20000000000005,195.4 L324.8,201.6 Q325.6,204 323.1,204.6 L315.20000000000005,204.8" fill="none" stroke="#fff" stroke-opacity=".75" stroke-width="4" stroke-linecap="round"/><path d="M317.20000000000005,195.4 L324.8,201.6 Q325.6,204 323.1,204.6 L315.20000000000005,204.8" fill="none" stroke="#1c1c1c" stroke-width="2.2" stroke-linecap="round"/><circle cx="313.6" cy="196.2" r="1.7" fill="#444"/><circle cx="310.20000000000005" cy="198" r="1" fill="#222"/><rect x="316.6" y="199" width="1.8" height="1.8" fill="#111"/><path d="M311.6,202.6 L318.8,207.8 Q319.5,211 316.5,211.4 L310,211.8 Q308,212.5 306.5,215.5" fill="none" stroke="#fff" stroke-opacity=".75" stroke-width="4" stroke-linecap="round"/><path d="M311.6,202.6 L318.8,207.8 Q319.5,211 316.5,211.4 L310,211.8 Q308,212.5 306.5,215.5" fill="none" stroke="#1c1c1c" stroke-width="2.2" stroke-linecap="round"/><circle cx="308" cy="203.39999999999998" r="1.7" fill="#444"/><circle cx="304.6" cy="205.2" r="1" fill="#222"/><rect x="311" y="206.2" width="1.8" height="1.8" fill="#111"/></g><rect x="320.5" y="205.5" width="12" height="12" fill="#c8c8c8" stroke="#555" stroke-width="1"/><path d="M322,208.5 H331 M322,211.5 H331 M322,214.5 H328" stroke="#909090" stroke-width="1"/><path d="M335,203 L326,213.5" stroke="#555" stroke-width="2"/><path d="M390,200 h6 l-3,3 z" fill="#333"/><g transform="translate(105,-1)"><path d="M323.6,188.4 L331.2,194.6 Q332,197 329.5,197.6 L321.6,197.8" fill="none" stroke="#fff" stroke-opacity=".75" stroke-width="4" stroke-linecap="round"/><path d="M323.6,188.4 L331.2,194.6 Q332,197 329.5,197.6 L321.6,197.8" fill="none" stroke="#1c1c1c" stroke-width="2.2" stroke-linecap="round"/><circle cx="320" cy="189.2" r="1.7" fill="#444"/><circle cx="316.6" cy="191" r="1" fill="#222"/><rect x="323" y="192" width="1.8" height="1.8" fill="#111"/><path d="M317.20000000000005,195.4 L324.8,201.6 Q325.6,204 323.1,204.6 L315.20000000000005,204.8" fill="none" stroke="#fff" stroke-opacity=".75" stroke-width="4" stroke-linecap="round"/><path d="M317.20000000000005,195.4 L324.8,201.6 Q325.6,204 323.1,204.6 L315.20000000000005,204.8" fill="none" stroke="#1c1c1c" stroke-width="2.2" stroke-linecap="round"/><circle cx="313.6" cy="196.2" r="1.7" fill="#444"/><circle cx="310.20000000000005" cy="198" r="1" fill="#222"/><rect x="316.6" y="199" width="1.8" height="1.8" fill="#111"/><path d="M311.6,202.6 L318.8,207.8 Q319.5,211 316.5,211.4 L310,211.8 Q308,212.5 306.5,215.5" fill="none" stroke="#fff" stroke-opacity=".75" stroke-width="4" stroke-linecap="round"/><path d="M311.6,202.6 L318.8,207.8 Q319.5,211 316.5,211.4 L310,211.8 Q308,212.5 306.5,215.5" fill="none" stroke="#1c1c1c" stroke-width="2.2" stroke-linecap="round"/><circle cx="308" cy="203.39999999999998" r="1.7" fill="#444"/><circle cx="304.6" cy="205.2" r="1" fill="#222"/><rect x="311" y="206.2" width="1.8" height="1.8" fill="#111"/></g><path d="M424,208.5 H433 V204.5 L441,210.5 L433,216.5 V212.5 H424Z" fill="url(#gblue)"/><path d="M495,200 h6 l-3,3 z" fill="#333"/><g transform="translate(515,195) scale(0.95)" fill="none" stroke="#383838" stroke-linecap="round"><path d="M3,20.7 C5,17.5 8,16 11.5,15.8 C16,15.5 19,14.5 21,12 C22.5,9.5 20,7.5 17.2,6.2 L10.7,2.9" stroke="#fff" stroke-opacity="0.7" stroke-width="4.8"/><path d="M3,20.7 C5,17.5 8,16 11.5,15.8 C16,15.5 19,14.5 21,12 C22.5,9.5 20,7.5 17.2,6.2 L10.7,2.9" stroke-width="2.8"/><path d="M6.8,1.5 Q4,3 4.8,6" stroke-width="1.7"/><circle cx="0.8" cy="6" r="1.2" fill="#383838" stroke="none"/><circle cx="10" cy="8.8" r="1.2" fill="#383838" stroke="none"/></g><radialGradient id="br" cx=".5" cy=".3" r=".7"><stop offset="0" stop-color="#fff"/><stop offset=".6" stop-color="#e03030"/></radialGradient><radialGradient id="bg" cx=".5" cy=".3" r=".7"><stop offset="0" stop-color="#d8f0c0"/><stop offset=".6" stop-color="#40a030"/></radialGradient><radialGradient id="bb" cx=".5" cy=".3" r=".7"><stop offset="0" stop-color="#d0e0ff"/><stop offset=".6" stop-color="#3060e0"/></radialGradient><circle cx="535.5" cy="190.5" r="4.6" fill="url(#br)"/><circle cx="530" cy="199" r="4.6" fill="url(#bg)"/><circle cx="541" cy="199.5" r="4.6" fill="url(#bb)"/><path d="M604,200 h6 l-3,3 z" fill="#333"/><rect x="622" y="192" width="30" height="19" fill="#eee" stroke="#2a2a2a" stroke-width="2"/><line x1="637.0" y1="192" x2="637.0" y2="211" stroke="#2a2a2a" stroke-width="1.5"/><rect x="623.5" y="193.5" width="13.0" height="16" fill="#e8ecf0"/><path d="M626,197 h2 v-2 h6 v2 h2 v2 h-2 v3 q3,1 3,5 v1 h-12 v-1 q0,-4 3,-5 v-3 h-2z" fill="url(#gblue)"/><line x1="640.0" y1="196.0" x2="649" y2="196.0" stroke="#333" stroke-width="1"/><line x1="640.0" y1="199.4" x2="649" y2="199.4" stroke="#333" stroke-width="1"/><line x1="640.0" y1="202.8" x2="649" y2="202.8" stroke="#333" stroke-width="1"/><line x1="640.0" y1="206.2" x2="649" y2="206.2" stroke="#333" stroke-width="1"/><circle cx="1049" cy="202.5" r="15" fill="#8a8a8a" fill-opacity="0.5"/><circle cx="1049" cy="202" r="14.6" fill="#fdfdfd"/><circle cx="1049" cy="202" r="12.8" fill="url(#ggreen)" stroke="#1f5a10" stroke-width="1"/><path d="M1049,210.5 V194 M1041.5,201 L1049,193.5 L1056.5,201" fill="none" stroke="#fff" stroke-width="3.3"/><circle cx="1091" cy="202.5" r="15" fill="#8a8a8a" fill-opacity="0.5"/><circle cx="1091" cy="202" r="14.6" fill="#fdfdfd"/><circle cx="1091" cy="202" r="12.8" fill="url(#ggreen)" stroke="#1f5a10" stroke-width="1"/><path d="M1091,193.5 V210 M1083.5,203 L1091,210.5 L1098.5,203" fill="none" stroke="#fff" stroke-width="3.3"/><path d="M307.5,236.5 H320 L325.5,242 V264.5 H307.5 Z" fill="url(#gdoc)" stroke="#7a90b8" stroke-width="1"/><path d="M320,236.5 V242 H325.5" fill="#fff" stroke="#7a90b8" stroke-width="1"/><rect x="318" y="251" width="14.5" height="14.5" rx="1.2" fill="#3a4870"/><rect x="320.5" y="252" width="9" height="5.5" fill="#dde4ee"/><rect x="326" y="253" width="1.6" height="3" fill="#2a3450"/><rect x="320" y="260.5" width="10.5" height="4" fill="#f0f4f8"/><rect x="320" y="263" width="10.5" height="1.5" fill="#5a9ae0"/><path d="M344,249 h6 l-3,3 z" fill="#333"/><path d="M365,237 H384 L391.5,244.5 V264.5 H365Z" fill="#fdfdfd"/><path d="M365.3,237 V264.6 H391.5 V244.5" fill="none" stroke="#222" stroke-width="1.3"/><path d="M384,237 V244.5 H391.5" fill="#f0f0f0" stroke="#ccc" stroke-width="0.6"/><text x="367" y="260.5" font-family="Liberation Serif" font-weight="bold" font-size="18" fill="#1038b8">A</text><path d="M383,251 Q386,245 389,251Z M383,254 Q386,260 389,254Z" fill="#0a30a0"/><path d="M433,249 h6 l-3,3 z" fill="#333"/><path d="M468,237.5 H483.5 V262.5 H462.5 V243 Z" fill="url(#gdoc)" stroke="#4a86d0" stroke-width="1.2"/><path d="M462.5,243 H468 V237.5" fill="#fff" stroke="#9ab8e0" stroke-width="0.8"/><polygon points="488.5,256.5 488.4,257.7 486.1,258.4 485.8,259.3 487.2,261.2 486.5,262.3 484.2,261.7 483.5,262.4 483.8,264.7 482.6,265.3 480.9,263.6 480.0,263.8 479.0,266.0 477.8,265.9 477.1,263.6 476.2,263.3 474.2,264.7 473.2,264.0 473.8,261.7 473.1,261.0 470.8,261.2 470.2,260.1 471.9,258.4 471.7,257.5 469.5,256.5 469.6,255.3 471.9,254.6 472.2,253.7 470.8,251.8 471.5,250.7 473.8,251.3 474.5,250.6 474.2,248.3 475.4,247.7 477.1,249.4 478.0,249.2 479.0,247.0 480.2,247.1 480.9,249.4 481.8,249.7 483.8,248.3 484.8,249.0 484.2,251.3 484.9,252.0 487.2,251.8 487.8,252.9 486.1,254.6 486.3,255.5" fill="url(#ggear)" stroke="#777" stroke-width="0.8"/><circle cx="479" cy="256.5" r="3.2" fill="#d8d8d8" stroke="#6a6a6a" stroke-width="1.6"/><polygon points="508.3,248.5 512.8,237.7 528.2,238.4 521.9,251.0" fill="url(#gdoc)" stroke="#4a86d0" stroke-width="1.2"/><polygon points="500.3,254.1 508.6,248.5 531.4,248.2 524.7,253.0 519.1,256.9" fill="#e8e8e8" stroke="#9a9a9a" stroke-width="0.7"/><polygon points="500.3,254.0 519.1,256.9 519.1,264.3 500.3,259.4" fill="url(#gprint)" stroke="#8a8a8a" stroke-width="0.7"/><polygon points="519.0,257.0 531.7,248.5 531.7,256.6 519.0,264.3" fill="#a8a8a8" stroke="#888" stroke-width="0.7"/><polygon points="504.0,257.5 515.5,259.3 515.5,261.0 504.0,259.2" fill="#555"/><rect x="516.5" y="259" width="1.8" height="1.8" fill="#3c3"/><rect x="547.5" y="238.5" width="21" height="25" fill="url(#gdoc)" stroke="#4a86d0" stroke-width="1.2"/><line x1="559.5" y1="260.5" x2="555" y2="265.5" stroke="#c89828" stroke-width="3.4" stroke-linecap="round"/><line x1="559" y1="261" x2="563" y2="256.5" stroke="#2a3050" stroke-width="3"/><circle cx="567" cy="253" r="6.2" fill="#e4eef6" fill-opacity="0.85" stroke="#6a6a6a" stroke-width="1.6"/><path d="M787.8,328.5 V322.5" stroke="#1030c8" stroke-width="1.8"/><path d="M784,325 L787.8,320.5 L791.6,325" fill="none" stroke="#1030c8" stroke-width="1.6"/><rect x="1857" y="284" width="3" height="1" fill="#333"/><rect x="1857" y="324" width="3" height="1" fill="#333"/></svg></body></html>
